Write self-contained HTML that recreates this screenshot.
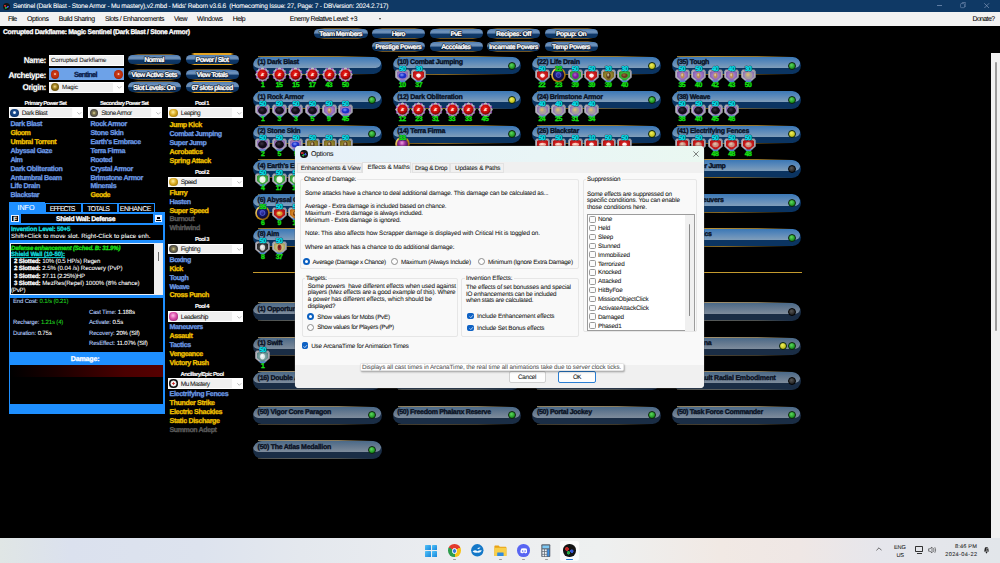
<!DOCTYPE html>
<html><head><meta charset="utf-8"><title>Mids Reborn</title>
<style>
*{box-sizing:border-box;margin:0;padding:0}
html,body{width:1000px;height:563px;overflow:hidden;background:#000}
body{position:relative;font-family:"Liberation Sans",sans-serif;}
.a{position:absolute}
svg.tx{pointer-events:none;overflow:visible}
svg.tx text{font-family:"Liberation Sans",sans-serif;white-space:pre;text-rendering:geometricPrecision}
/* power bars */
.bar{position:absolute;height:17.5px}
.bar:before,.bar:after{content:"";position:absolute;left:5px;right:9px;height:1px;background:linear-gradient(90deg,#94742a,#b8923a 30%,#94742a 70%,rgba(120,90,30,0))}
.bar:before{top:-0.7px}.bar:after{bottom:-0.7px;background:linear-gradient(90deg,#6a5018,#8a6a24 40%,rgba(110,84,26,0))}
.bar b{position:absolute;left:0;top:0;right:0;bottom:0;border-radius:9px;background:#0b3461;overflow:hidden}
.bar i{position:absolute;left:0;right:0.8px;top:0;height:11.3px;border-radius:9px 9px 7px 7px/8px 8px 6px 6px;background:linear-gradient(#3b78b6,#5a89ba 45%,#809eba)}
.bar.g b{background:#1a2d45}
.bar.g:before,.bar.g:after{background:linear-gradient(90deg,#8a7c5c,#a09070 30%,#8a7c5c 70%,rgba(130,116,90,0))}
.bar.g i{background:linear-gradient(#4a6988,#63788f 45%,#7e8c9c)}
.bar.g:after{opacity:0.45}
.tg{position:absolute;width:8px;height:8px;border-radius:50%;border:0.8px solid #0c260c}
.tg.gr{background:radial-gradient(circle at 40% 35%,#5fd65f,#1f9a24 60%,#0d5a12)}
.tg.ye{background:radial-gradient(circle at 40% 35%,#f0f060,#c4c420 60%,#77770a)}
.tg.bk{background:radial-gradient(circle at 40% 35%,#555,#2a2a2a 60%,#111);border-color:#000}
/* small buttons */
.btn{position:absolute;border-radius:5px;background:linear-gradient(#4f7db4 0,#7093bb 30%,#6388b3 46%,#10396a 56%,#0c335f 100%)}
.btn:before,.btn:after{content:"";position:absolute;left:5px;right:5px;height:0.9px;background:linear-gradient(90deg,transparent,#6e5220 12%,#6e5220 88%,transparent)}
.btn:before{top:-0.9px}.btn:after{bottom:-0.9px}
.btn.on:before,.btn.on:after{height:1.4px;background:linear-gradient(90deg,transparent,#e3a322 8%,#e3a322 92%,transparent)}
.btn.on:before{top:-1.4px}.btn.on:after{bottom:-1.4px}
.ic{position:absolute;width:15px;height:16px}
.dd{position:absolute;background:linear-gradient(90deg,#f0f0f0 0,#f0f0f0 86%,#fff 87%);border:0.7px solid #fff;height:10.7px}
.chev{position:absolute;width:4.6px;height:2.7px;overflow:visible}
.gb{position:absolute;border:0.5px solid #e6e6e6;border-radius:2px}
.cb{position:absolute;width:6.6px;height:6.6px;border:0.5px solid #999;border-radius:1.6px;background:#fbfbfb}
.cb.on{background:#0f62c4;border-color:#0f62c4}
.cb svg{position:absolute;left:-0.5px;top:-0.5px}
.rd{position:absolute;width:7px;height:7px;border:0.5px solid #8c8c8c;border-radius:50%;background:#fdfdfd}
.rd.on{border:2px solid #0a5fc0;background:#fff}
</style></head><body>
<!--DEFS--><svg width="0" height="0" style="position:absolute"><defs><radialGradient id="gFr" cx="45%" cy="40%" r="70%"><stop offset="0" stop-color="#dcdce2"/><stop offset="0.6" stop-color="#b0b0ba"/><stop offset="1" stop-color="#74747f"/></radialGradient><radialGradient id="c_red" cx="45%" cy="40%" r="60%"><stop offset="0" stop-color="#f85040"/><stop offset="0.3" stop-color="#e01410"/><stop offset="0.75" stop-color="#b40808"/><stop offset="1" stop-color="#580000"/></radialGradient><radialGradient id="c_navy" cx="45%" cy="40%" r="60%"><stop offset="0" stop-color="#4040b8"/><stop offset="0.5" stop-color="#181870"/><stop offset="1" stop-color="#080830"/></radialGradient><linearGradient id="gGold" x1="0" y1="0" x2="1" y2="1"><stop offset="0" stop-color="#fff0a0"/><stop offset="0.5" stop-color="#c89018"/><stop offset="1" stop-color="#6a4808"/></linearGradient><radialGradient id="b_dark" cx="50%" cy="45%" r="62%"><stop offset="0" stop-color="#c0a2dc"/><stop offset="1" stop-color="#8460ac"/></radialGradient><radialGradient id="g_dark" cx="42%" cy="38%" r="65%"><stop offset="0" stop-color="#3a3040"/><stop offset="0.55" stop-color="#120c18"/><stop offset="1" stop-color="#120c18"/></radialGradient><radialGradient id="b_purple" cx="50%" cy="45%" r="62%"><stop offset="0" stop-color="#b894d8"/><stop offset="1" stop-color="#7e56aa"/></radialGradient><radialGradient id="g_purple" cx="42%" cy="38%" r="65%"><stop offset="0" stop-color="#f0d8b0"/><stop offset="0.55" stop-color="#b88a58"/><stop offset="1" stop-color="#b88a58"/></radialGradient><radialGradient id="b_blue" cx="50%" cy="45%" r="62%"><stop offset="0" stop-color="#c0a2dc"/><stop offset="1" stop-color="#8460ac"/></radialGradient><radialGradient id="g_blue" cx="42%" cy="38%" r="65%"><stop offset="0" stop-color="#8098ff"/><stop offset="0.55" stop-color="#1c30c8"/><stop offset="1" stop-color="#1c30c8"/></radialGradient><radialGradient id="b_green" cx="50%" cy="45%" r="62%"><stop offset="0" stop-color="#70d868"/><stop offset="1" stop-color="#228a28"/></radialGradient><radialGradient id="g_green" cx="42%" cy="38%" r="65%"><stop offset="0" stop-color="#ffffff"/><stop offset="0.55" stop-color="#e8f4e4"/><stop offset="1" stop-color="#e8f4e4"/></radialGradient><radialGradient id="b_tan" cx="50%" cy="45%" r="62%"><stop offset="0" stop-color="#c0aad2"/><stop offset="1" stop-color="#866ca4"/></radialGradient><radialGradient id="g_tan" cx="42%" cy="38%" r="65%"><stop offset="0" stop-color="#e8c070"/><stop offset="0.55" stop-color="#a8a098"/><stop offset="1" stop-color="#a8a098"/></radialGradient><radialGradient id="b_olive" cx="50%" cy="45%" r="62%"><stop offset="0" stop-color="#b8a840"/><stop offset="1" stop-color="#6a5c18"/></radialGradient><radialGradient id="g_olive" cx="42%" cy="38%" r="65%"><stop offset="0" stop-color="#e8e0c0"/><stop offset="0.55" stop-color="#5a3a18"/><stop offset="1" stop-color="#5a3a18"/></radialGradient><radialGradient id="b_grn2" cx="50%" cy="45%" r="62%"><stop offset="0" stop-color="#50e050"/><stop offset="1" stop-color="#1c9020"/></radialGradient><radialGradient id="g_grn2" cx="42%" cy="38%" r="65%"><stop offset="0" stop-color="#a06a40"/><stop offset="0.55" stop-color="#6a3a1c"/><stop offset="1" stop-color="#6a3a1c"/></radialGradient><radialGradient id="b_teal" cx="50%" cy="45%" r="62%"><stop offset="0" stop-color="#a8c8c8"/><stop offset="1" stop-color="#4c7878"/></radialGradient><radialGradient id="g_teal" cx="42%" cy="38%" r="65%"><stop offset="0" stop-color="#ffffff"/><stop offset="0.55" stop-color="#dfeaea"/><stop offset="1" stop-color="#dfeaea"/></radialGradient><radialGradient id="b_white" cx="50%" cy="45%" r="62%"><stop offset="0" stop-color="#5c5c5c"/><stop offset="1" stop-color="#1c1c1c"/></radialGradient><radialGradient id="g_white" cx="42%" cy="38%" r="65%"><stop offset="0" stop-color="#ffffff"/><stop offset="0.55" stop-color="#d8d8d8"/><stop offset="1" stop-color="#d8d8d8"/></radialGradient><radialGradient id="b_fence" cx="50%" cy="45%" r="62%"><stop offset="0" stop-color="#f03030"/><stop offset="1" stop-color="#a80c0c"/></radialGradient><radialGradient id="g_fence" cx="42%" cy="38%" r="65%"><stop offset="0" stop-color="#f0c8b0"/><stop offset="0.55" stop-color="#c89080"/><stop offset="1" stop-color="#c89080"/></radialGradient><radialGradient id="b_redg" cx="50%" cy="45%" r="62%"><stop offset="0" stop-color="#e83030"/><stop offset="1" stop-color="#a00c0c"/></radialGradient><radialGradient id="g_redg" cx="42%" cy="38%" r="65%"><stop offset="0" stop-color="#ffe090"/><stop offset="0.55" stop-color="#d89a28"/><stop offset="1" stop-color="#d89a28"/></radialGradient><radialGradient id="b_cream" cx="50%" cy="45%" r="62%"><stop offset="0" stop-color="#e4dca0"/><stop offset="1" stop-color="#a09850"/></radialGradient><radialGradient id="g_cream" cx="42%" cy="38%" r="65%"><stop offset="0" stop-color="#402020"/><stop offset="0.55" stop-color="#a02828"/><stop offset="1" stop-color="#a02828"/></radialGradient><radialGradient id="b_orange" cx="50%" cy="45%" r="62%"><stop offset="0" stop-color="#f8b040"/><stop offset="1" stop-color="#b05808"/></radialGradient><radialGradient id="g_orange" cx="42%" cy="38%" r="65%"><stop offset="0" stop-color="#ffd890"/><stop offset="0.55" stop-color="#7a3808"/><stop offset="1" stop-color="#7a3808"/></radialGradient><radialGradient id="b_violet" cx="50%" cy="45%" r="62%"><stop offset="0" stop-color="#58d858"/><stop offset="1" stop-color="#209028"/></radialGradient><radialGradient id="g_violet" cx="42%" cy="38%" r="65%"><stop offset="0" stop-color="#b060d0"/><stop offset="0.55" stop-color="#7a1c9c"/><stop offset="1" stop-color="#7a1c9c"/></radialGradient><radialGradient id="b_redw" cx="50%" cy="45%" r="62%"><stop offset="0" stop-color="#f03030"/><stop offset="1" stop-color="#a80c0c"/></radialGradient><radialGradient id="g_redw" cx="42%" cy="38%" r="65%"><stop offset="0" stop-color="#ffffff"/><stop offset="0.55" stop-color="#ffe8e8"/><stop offset="1" stop-color="#ffe8e8"/></radialGradient><radialGradient id="b_pinkr" cx="50%" cy="45%" r="62%"><stop offset="0" stop-color="#f03030"/><stop offset="1" stop-color="#a80c0c"/></radialGradient><radialGradient id="g_pinkr" cx="42%" cy="38%" r="65%"><stop offset="0" stop-color="#ffe8e0"/><stop offset="0.55" stop-color="#f4b0a0"/><stop offset="1" stop-color="#f4b0a0"/></radialGradient><radialGradient id="c_mag" cx="45%" cy="40%" r="60%"><stop offset="0" stop-color="#f0a0e0"/><stop offset="0.45" stop-color="#a030a0"/><stop offset="1" stop-color="#401048"/></radialGradient><symbol id="i_io" viewBox="0 0 15 16"><polygon points="14.95,7.60 13.78,9.28 13.95,11.32 12.10,12.20 11.23,14.05 9.18,13.88 7.50,15.05 5.82,13.88 3.78,14.05 2.90,12.20 1.05,11.32 1.22,9.28 0.05,7.60 1.22,5.92 1.05,3.88 2.90,3.00 3.77,1.15 5.82,1.32 7.50,0.15 9.18,1.32 11.23,1.15 12.10,3.00 13.95,3.87 13.78,5.92" fill="url(#gFr)"/><circle cx="13.33" cy="10.00" r="0.85" fill="#8a30b0"/><circle cx="9.93" cy="13.41" r="0.85" fill="#8a30b0"/><circle cx="5.10" cy="13.43" r="0.85" fill="#8a30b0"/><circle cx="1.69" cy="10.03" r="0.85" fill="#8a30b0"/><circle cx="1.67" cy="5.20" r="0.85" fill="#8a30b0"/><circle cx="5.07" cy="1.79" r="0.85" fill="#8a30b0"/><circle cx="9.90" cy="1.77" r="0.85" fill="#8a30b0"/><circle cx="13.31" cy="5.17" r="0.85" fill="#8a30b0"/><circle cx="7.5" cy="7.6" r="5.1" fill="url(#c_red)"/><path d="M5.4 8.4 L7.4 5.9 L9.7 6.5 L8.2 7.6 L9.2 8.6 L6.6 9.2 Z" fill="#ffe4d4" opacity="0.92"/></symbol><symbol id="i_dark" viewBox="0 0 15 16"><path d="M1.6 2.6 L13.4 2.6 L14.8 4.2 L14.8 10.6 L9.2 15.3 L5.8 15.3 L0.2 10.6 L0.2 4.2 Z" fill="url(#gFr)"/><path d="M9.2 15.3 L5.8 15.3 L3.4 13.2 L11.6 13.2 Z" fill="#4a86c8"/><path d="M3.1 4.2 L11.9 4.2 L13 5.3 L13 10 L8.6 13.5 L6.4 13.5 L2 10 L2 5.3 Z" fill="url(#b_dark)"/><ellipse cx="7.5" cy="8.6" rx="4.4" ry="3.9" fill="url(#g_dark)"/></symbol><symbol id="i_purple" viewBox="0 0 15 16"><path d="M1.6 2.6 L13.4 2.6 L14.8 4.2 L14.8 10.6 L9.2 15.3 L5.8 15.3 L0.2 10.6 L0.2 4.2 Z" fill="url(#gFr)"/><path d="M9.2 15.3 L5.8 15.3 L3.4 13.2 L11.6 13.2 Z" fill="#4a86c8"/><path d="M3.1 4.2 L11.9 4.2 L13 5.3 L13 10 L8.6 13.5 L6.4 13.5 L2 10 L2 5.3 Z" fill="url(#b_purple)"/><ellipse cx="7.5" cy="8.6" rx="2.0" ry="2.8" fill="url(#g_purple)"/></symbol><symbol id="i_blue" viewBox="0 0 15 16"><path d="M1.6 2.6 L13.4 2.6 L14.8 4.2 L14.8 10.6 L9.2 15.3 L5.8 15.3 L0.2 10.6 L0.2 4.2 Z" fill="url(#gFr)"/><path d="M9.2 15.3 L5.8 15.3 L3.4 13.2 L11.6 13.2 Z" fill="#4a86c8"/><path d="M3.1 4.2 L11.9 4.2 L13 5.3 L13 10 L8.6 13.5 L6.4 13.5 L2 10 L2 5.3 Z" fill="url(#b_blue)"/><ellipse cx="7.5" cy="8.6" rx="3.9" ry="2.9" fill="url(#g_blue)"/></symbol><symbol id="i_green" viewBox="0 0 15 16"><path d="M1.6 2.6 L13.4 2.6 L14.8 4.2 L14.8 10.6 L9.2 15.3 L5.8 15.3 L0.2 10.6 L0.2 4.2 Z" fill="url(#gFr)"/><path d="M9.2 15.3 L5.8 15.3 L3.4 13.2 L11.6 13.2 Z" fill="#4a86c8"/><path d="M3.1 4.2 L11.9 4.2 L13 5.3 L13 10 L8.6 13.5 L6.4 13.5 L2 10 L2 5.3 Z" fill="url(#b_green)"/><ellipse cx="7.5" cy="8.6" rx="3.0" ry="3.3" fill="url(#g_green)"/></symbol><symbol id="i_tan" viewBox="0 0 15 16"><path d="M1.6 2.6 L13.4 2.6 L14.8 4.2 L14.8 10.6 L9.2 15.3 L5.8 15.3 L0.2 10.6 L0.2 4.2 Z" fill="url(#gFr)"/><path d="M9.2 15.3 L5.8 15.3 L3.4 13.2 L11.6 13.2 Z" fill="#4a86c8"/><path d="M3.1 4.2 L11.9 4.2 L13 5.3 L13 10 L8.6 13.5 L6.4 13.5 L2 10 L2 5.3 Z" fill="url(#b_tan)"/><ellipse cx="7.5" cy="8.6" rx="3.6" ry="3.5" fill="url(#g_tan)"/></symbol><symbol id="i_olive" viewBox="0 0 15 16"><path d="M1.6 2.6 L13.4 2.6 L14.8 4.2 L14.8 10.6 L9.2 15.3 L5.8 15.3 L0.2 10.6 L0.2 4.2 Z" fill="url(#gFr)"/><path d="M9.2 15.3 L5.8 15.3 L3.4 13.2 L11.6 13.2 Z" fill="#4a86c8"/><path d="M3.1 4.2 L11.9 4.2 L13 5.3 L13 10 L8.6 13.5 L6.4 13.5 L2 10 L2 5.3 Z" fill="url(#b_olive)"/><ellipse cx="7.5" cy="8.6" rx="2.2" ry="3.2" fill="url(#g_olive)"/></symbol><symbol id="i_grn2" viewBox="0 0 15 16"><path d="M1.6 2.6 L13.4 2.6 L14.8 4.2 L14.8 10.6 L9.2 15.3 L5.8 15.3 L0.2 10.6 L0.2 4.2 Z" fill="url(#gFr)"/><path d="M9.2 15.3 L5.8 15.3 L3.4 13.2 L11.6 13.2 Z" fill="#4a86c8"/><path d="M3.1 4.2 L11.9 4.2 L13 5.3 L13 10 L8.6 13.5 L6.4 13.5 L2 10 L2 5.3 Z" fill="url(#b_grn2)"/><ellipse cx="7.5" cy="8.6" rx="3.2" ry="2.4" fill="url(#g_grn2)"/></symbol><symbol id="i_teal" viewBox="0 0 15 16"><path d="M1.6 2.6 L13.4 2.6 L14.8 4.2 L14.8 10.6 L9.2 15.3 L5.8 15.3 L0.2 10.6 L0.2 4.2 Z" fill="url(#gFr)"/><path d="M9.2 15.3 L5.8 15.3 L3.4 13.2 L11.6 13.2 Z" fill="#4a86c8"/><path d="M3.1 4.2 L11.9 4.2 L13 5.3 L13 10 L8.6 13.5 L6.4 13.5 L2 10 L2 5.3 Z" fill="url(#b_teal)"/><ellipse cx="7.5" cy="8.6" rx="2.4" ry="2.8" fill="url(#g_teal)"/></symbol><symbol id="i_white" viewBox="0 0 15 16"><path d="M1.6 2.6 L13.4 2.6 L14.8 4.2 L14.8 10.6 L9.2 15.3 L5.8 15.3 L0.2 10.6 L0.2 4.2 Z" fill="url(#gFr)"/><path d="M9.2 15.3 L5.8 15.3 L3.4 13.2 L11.6 13.2 Z" fill="#4a86c8"/><path d="M3.1 4.2 L11.9 4.2 L13 5.3 L13 10 L8.6 13.5 L6.4 13.5 L2 10 L2 5.3 Z" fill="url(#b_white)"/><ellipse cx="7.5" cy="8.6" rx="2.6" ry="3.1" fill="url(#g_white)"/></symbol><symbol id="i_fence" viewBox="0 0 15 16"><path d="M1.6 2.6 L13.4 2.6 L14.8 4.2 L14.8 10.6 L9.2 15.3 L5.8 15.3 L0.2 10.6 L0.2 4.2 Z" fill="url(#gFr)"/><path d="M9.2 15.3 L5.8 15.3 L3.4 13.2 L11.6 13.2 Z" fill="#4a86c8"/><path d="M3.1 4.2 L11.9 4.2 L13 5.3 L13 10 L8.6 13.5 L6.4 13.5 L2 10 L2 5.3 Z" fill="url(#b_fence)"/><ellipse cx="7.5" cy="8.6" rx="3.2" ry="2.6" fill="url(#g_fence)"/></symbol><symbol id="i_redg" viewBox="0 0 15 16"><path d="M1.6 2.6 L13.4 2.6 L14.8 4.2 L14.8 10.6 L9.2 15.3 L5.8 15.3 L0.2 10.6 L0.2 4.2 Z" fill="url(#gFr)"/><path d="M9.2 15.3 L5.8 15.3 L3.4 13.2 L11.6 13.2 Z" fill="#4a86c8"/><path d="M3.1 4.2 L11.9 4.2 L13 5.3 L13 10 L8.6 13.5 L6.4 13.5 L2 10 L2 5.3 Z" fill="url(#b_redg)"/><ellipse cx="7.5" cy="8.6" rx="3.0" ry="2.4" fill="url(#g_redg)"/></symbol><symbol id="i_cream" viewBox="0 0 15 16"><path d="M1.6 2.6 L13.4 2.6 L14.8 4.2 L14.8 10.6 L9.2 15.3 L5.8 15.3 L0.2 10.6 L0.2 4.2 Z" fill="url(#gFr)"/><path d="M9.2 15.3 L5.8 15.3 L3.4 13.2 L11.6 13.2 Z" fill="#4a86c8"/><path d="M3.1 4.2 L11.9 4.2 L13 5.3 L13 10 L8.6 13.5 L6.4 13.5 L2 10 L2 5.3 Z" fill="url(#b_cream)"/><ellipse cx="7.5" cy="8.6" rx="2.0" ry="3.0" fill="url(#g_cream)"/></symbol><symbol id="i_orange" viewBox="0 0 15 16"><path d="M1.6 2.6 L13.4 2.6 L14.8 4.2 L14.8 10.6 L9.2 15.3 L5.8 15.3 L0.2 10.6 L0.2 4.2 Z" fill="url(#gFr)"/><path d="M9.2 15.3 L5.8 15.3 L3.4 13.2 L11.6 13.2 Z" fill="#4a86c8"/><path d="M3.1 4.2 L11.9 4.2 L13 5.3 L13 10 L8.6 13.5 L6.4 13.5 L2 10 L2 5.3 Z" fill="url(#b_orange)"/><ellipse cx="7.5" cy="8.6" rx="2.6" ry="2.6" fill="url(#g_orange)"/></symbol><symbol id="i_violet" viewBox="0 0 15 16"><path d="M1.6 2.6 L13.4 2.6 L14.8 4.2 L14.8 10.6 L9.2 15.3 L5.8 15.3 L0.2 10.6 L0.2 4.2 Z" fill="url(#gFr)"/><path d="M9.2 15.3 L5.8 15.3 L3.4 13.2 L11.6 13.2 Z" fill="#4a86c8"/><path d="M3.1 4.2 L11.9 4.2 L13 5.3 L13 10 L8.6 13.5 L6.4 13.5 L2 10 L2 5.3 Z" fill="url(#b_violet)"/><ellipse cx="7.5" cy="8.6" rx="3.3" ry="3.4" fill="url(#g_violet)"/></symbol><symbol id="i_redw" viewBox="0 0 15 16"><path d="M1.6 2.6 L13.4 2.6 L14.8 4.2 L14.8 10.6 L9.2 15.3 L5.8 15.3 L0.2 10.6 L0.2 4.2 Z" fill="url(#gFr)"/><path d="M9.2 15.3 L5.8 15.3 L3.4 13.2 L11.6 13.2 Z" fill="#4a86c8"/><path d="M3.1 4.2 L11.9 4.2 L13 5.3 L13 10 L8.6 13.5 L6.4 13.5 L2 10 L2 5.3 Z" fill="url(#b_redw)"/><ellipse cx="7.5" cy="8.6" rx="2.3" ry="2.1" fill="url(#g_redw)"/></symbol><symbol id="i_pinkr" viewBox="0 0 15 16"><path d="M1.6 2.6 L13.4 2.6 L14.8 4.2 L14.8 10.6 L9.2 15.3 L5.8 15.3 L0.2 10.6 L0.2 4.2 Z" fill="url(#gFr)"/><path d="M9.2 15.3 L5.8 15.3 L3.4 13.2 L11.6 13.2 Z" fill="#4a86c8"/><path d="M3.1 4.2 L11.9 4.2 L13 5.3 L13 10 L8.6 13.5 L6.4 13.5 L2 10 L2 5.3 Z" fill="url(#b_pinkr)"/><ellipse cx="7.5" cy="8.6" rx="3.5" ry="1.9" fill="url(#g_pinkr)"/></symbol><symbol id="i_ring2" viewBox="0 0 15 16"><circle cx="7.5" cy="8" r="7.3" fill="url(#gGold)"/><circle cx="7.5" cy="8" r="5.5" fill="url(#c_mag)"/></symbol><symbol id="i_ring" viewBox="0 0 15 16"><circle cx="7.5" cy="8" r="7.3" fill="url(#gGold)"/><circle cx="7.5" cy="8" r="5.7" fill="url(#c_navy)"/><circle cx="7.5" cy="8" r="2.4" fill="none" stroke="#5868e0" stroke-width="0.8"/></symbol></defs></svg>
<div class="a" style="left:0;top:0;width:1000px;height:12px;background:#0f3965"></div><div class="a" style="left:0;top:12px;width:1000px;height:13.6px;background:#f2f2f2"></div><div class="a" style="left:3px;top:2.5px;width:7px;height:7px;border-radius:50%;background:radial-gradient(circle at 30% 38%,#c02828 0,#c02828 14%,transparent 18%),radial-gradient(circle at 42% 68%,#28a848 0,#28a848 13%,transparent 17%),radial-gradient(circle at 68% 55%,#3858d8 0,#3858d8 13%,transparent 17%),#141414"></div><div class="a" style="left:937.2px;top:4.9px;width:5.2px;height:0.7px;background:#5f7da3"></div><svg class="a" style="left:959.8px;top:2.2px" width="6.4" height="6.4" viewBox="0 0 7 7"><rect x="0.6" y="1.8" width="4.4" height="4.4" rx="0.8" fill="none" stroke="#6f8bb0" stroke-width="0.7"/><path d="M2 1.8V1.4Q2 0.6 2.8 0.6H5.6Q6.4 0.6 6.4 1.4V4.2Q6.4 5 5.6 5H5" fill="none" stroke="#7d92b6" stroke-width="0.7"/></svg><svg class="a" style="left:984.2px;top:2.8px" width="5.4" height="5.4" viewBox="0 0 6 6"><path d="M0.3 0.3L5.7 5.7M5.7 0.3L0.3 5.7" stroke="#8ea3c2" stroke-width="0.7"/></svg><div class="a" style="left:379px;top:17.5px;width:0;height:0;border-left:1.6px solid transparent;border-right:1.6px solid transparent;border-top:2px solid #333"></div><div class="a" style="left:991px;top:53px;width:9px;height:485px;background:#f0f0f0"></div><div class="a" style="left:995px;top:62px;width:1.6px;height:269px;background:#9a9a9a;border-radius:1px"></div><div class="a" style="left:0;top:537.6px;width:1000px;height:25.4px;background:linear-gradient(90deg,#e0e6e5 0%,#dbe1ee 7%,#dde3ee 20%,#e4e8ee 30%,#ebedf0 45%,#eef0f0 60%,#f1e9e4 72%,#efe7e5 80%,#e6e6ec 88%,#e2e6ea 100%)"></div><div class="a" style="left:48.8px;top:55px;width:75.2px;height:10.8px;background:#f0f0f0;border:0.7px solid #fff"></div><div class="a" style="left:48.8px;top:68px;width:75.2px;height:11.9px;background:#6da2e8"></div><div class="a" style="left:50.6px;top:70.3px;width:8.4px;height:8.4px;border-radius:50%;background:radial-gradient(circle at 50% 45%,#fff0e8 0,#f0b8a0 9%,#d03c18 20%,#b42a0a 60%,#6a1404)"></div><div class="a" style="left:114.2px;top:70.3px;width:8.4px;height:8.4px;border-radius:50%;background:radial-gradient(circle at 50% 45%,#fff0e8 0,#f0b8a0 9%,#d03c18 20%,#b42a0a 60%,#6a1404)"></div><div class="a" style="left:48.8px;top:82px;width:75.2px;height:10.7px;background:linear-gradient(90deg,#f0f0f0 0,#f0f0f0 86%,#fff 87%);border:0.7px solid #fff"></div><div class="a" style="left:51px;top:83px;width:8.2px;height:8.2px;border-radius:50%;background:radial-gradient(circle at 48% 45%,#f0e0a0 0,#c8a848 18%,#8a6c14 45%,#4a3808)"></div><svg class="chev" style="left:116.7px;top:86.2px" viewBox="0 0 4.6 2.7"><path d="M0.3 0.3L2.3 2.3L4.3 0.3" fill="none" stroke="#858585" stroke-width="0.55"/></svg><div class="btn" style="left:127.8px;top:54.8px;width:53.1px;height:9.2px"></div><div class="btn on" style="left:185.7px;top:54.8px;width:53.3px;height:9.2px"></div><div class="btn" style="left:127.8px;top:69.7px;width:53.1px;height:9.3px"></div><div class="btn" style="left:185.7px;top:69.7px;width:53.3px;height:9.3px"></div><div class="btn" style="left:127.8px;top:82.2px;width:53.1px;height:9.6px"></div><div class="btn on" style="left:185.7px;top:82.2px;width:53.3px;height:9.6px"></div><div class="btn" style="left:314.3px;top:28.7px;width:53.3px;height:9.3px"></div><div class="btn" style="left:371.90000000000003px;top:28.7px;width:53.3px;height:9.3px"></div><div class="btn" style="left:429.5px;top:28.7px;width:53.3px;height:9.3px"></div><div class="btn" style="left:487.1px;top:28.7px;width:53.3px;height:9.3px"></div><div class="btn" style="left:544.7px;top:28.7px;width:53.3px;height:9.3px"></div><div class="btn" style="left:371.9px;top:42px;width:53.3px;height:9.3px"></div><div class="btn" style="left:429.5px;top:42px;width:53.3px;height:9.3px"></div><div class="btn" style="left:487.09999999999997px;top:42px;width:53.3px;height:9.3px"></div><div class="btn" style="left:544.7px;top:42px;width:53.3px;height:9.3px"></div><div class="dd" style="left:8.6px;top:107.4px;width:74.6px"></div><div class="a" style="left:10.4px;top:108.60000000000001px;width:8.2px;height:8.2px;border-radius:50%;background:radial-gradient(circle at 50% 45%,#ffffff 0,#e8f0ff 14%,#1c4f90 30%,#0b2f66 80%)"></div><svg class="chev" style="left:76.49999999999999px;top:111.80000000000001px" viewBox="0 0 4.6 2.7"><path d="M0.3 0.3L2.3 2.3L4.3 0.3" fill="none" stroke="#858585" stroke-width="0.55"/></svg><div class="dd" style="left:88px;top:107.4px;width:74.4px"></div><div class="a" style="left:89.8px;top:108.60000000000001px;width:8.2px;height:8.2px;border-radius:50%;background:radial-gradient(circle at 50% 50%,#e8e0b0 0,#8a8050 25%,#55524a 55%,#2a2a2a)"></div><svg class="chev" style="left:155.70000000000002px;top:111.80000000000001px" viewBox="0 0 4.6 2.7"><path d="M0.3 0.3L2.3 2.3L4.3 0.3" fill="none" stroke="#858585" stroke-width="0.55"/></svg><div class="dd" style="left:167.6px;top:107.4px;width:75.6px"></div><div class="a" style="left:169.4px;top:108.60000000000001px;width:8.2px;height:8.2px;border-radius:50%;background:radial-gradient(circle at 45% 40%,#fff0a0 0,#d8a81e 45%,#7a5a08)"></div><svg class="chev" style="left:236.5px;top:111.80000000000001px" viewBox="0 0 4.6 2.7"><path d="M0.3 0.3L2.3 2.3L4.3 0.3" fill="none" stroke="#858585" stroke-width="0.55"/></svg><div class="dd" style="left:167.6px;top:176.6px;width:75.6px"></div><div class="a" style="left:169.4px;top:177.79999999999998px;width:8.2px;height:8.2px;border-radius:50%;background:radial-gradient(circle at 45% 40%,#fff0a0 0,#d8a81e 45%,#7a5a08)"></div><svg class="chev" style="left:236.5px;top:181.0px" viewBox="0 0 4.6 2.7"><path d="M0.3 0.3L2.3 2.3L4.3 0.3" fill="none" stroke="#858585" stroke-width="0.55"/></svg><div class="dd" style="left:167.6px;top:243.8px;width:75.6px"></div><div class="a" style="left:169.4px;top:245.0px;width:8.2px;height:8.2px;border-radius:50%;background:radial-gradient(circle at 50% 50%,#e8e0b0 0,#8a8050 25%,#55524a 55%,#2a2a2a)"></div><svg class="chev" style="left:236.5px;top:248.20000000000002px" viewBox="0 0 4.6 2.7"><path d="M0.3 0.3L2.3 2.3L4.3 0.3" fill="none" stroke="#858585" stroke-width="0.55"/></svg><div class="dd" style="left:167.6px;top:311.2px;width:75.6px"></div><div class="a" style="left:169.4px;top:312.4px;width:8.2px;height:8.2px;border-radius:50%;background:radial-gradient(circle at 45% 40%,#ffc0e8 0,#d84aa8 45%,#7a1a58)"></div><svg class="chev" style="left:236.5px;top:315.59999999999997px" viewBox="0 0 4.6 2.7"><path d="M0.3 0.3L2.3 2.3L4.3 0.3" fill="none" stroke="#858585" stroke-width="0.55"/></svg><div class="dd" style="left:167.6px;top:378.2px;width:75.6px"></div><div class="a" style="left:169.4px;top:379.4px;width:8.2px;height:8.2px;border-radius:50%;background:radial-gradient(circle at 50% 50%,#c82020 0,#c82020 14%,#f0f0f0 22%,#f0f0f0 42%,#141414 52%)"></div><svg class="chev" style="left:236.5px;top:382.59999999999997px" viewBox="0 0 4.6 2.7"><path d="M0.3 0.3L2.3 2.3L4.3 0.3" fill="none" stroke="#858585" stroke-width="0.55"/></svg><div class="a" style="left:9px;top:201.6px;width:36px;height:10.4px;background:#1e8fff"></div><div class="a" style="left:45px;top:203.2px;width:36.5px;height:8.6px;border:0.7px solid #1e8fff;border-bottom:none;background:#000"></div><div class="a" style="left:81.5px;top:203.2px;width:36.7px;height:8.6px;border:0.7px solid #1e8fff;border-bottom:none;background:#000"></div><div class="a" style="left:118.2px;top:203.2px;width:36.5px;height:8.6px;border:0.7px solid #1e8fff;border-bottom:none;background:#000"></div><div class="a" style="left:9px;top:211.6px;width:155.5px;height:202.2px;background:#1e8fff"></div><div class="a" style="left:10.6px;top:214.6px;width:8px;height:7.6px;background:#000;border:0.7px solid #e8f0ff"></div><div class="a" style="left:20.8px;top:214px;width:131.8px;height:9px;background:#000"></div><div class="a" style="left:154.6px;top:214.6px;width:7.6px;height:7.6px;background:#000;border:0.6px solid #e8f0ff"></div><div class="a" style="left:156px;top:216px;width:4.8px;height:3.6px;border:0.7px solid #e8f0ff;border-top-width:1.3px"></div><div class="a" style="left:10px;top:224.8px;width:152.6px;height:15px;background:#000"></div><div class="a" style="left:10px;top:243px;width:152.6px;height:52.2px;background:#000;border:0.7px solid #e8eef8"></div><div class="a" style="left:153.6px;top:243.6px;width:8.4px;height:51px;background:#f0f0f0"></div><div class="a" style="left:157.9px;top:252.4px;width:0.9px;height:8.8px;background:#6a6a6a"></div><div class="a" style="left:10.4px;top:297.8px;width:152.2px;height:54.4px;background:#000"></div><div class="a" style="left:10px;top:365px;width:152.6px;height:38.6px;background:#000"></div><div class="a" style="left:10px;top:365px;width:152.6px;height:12px;background:linear-gradient(90deg,#000 0%,#1a0000 30%,#4a0000 75%,#560000 100%)"></div><div class="bar" style="left:253.0px;top:56.8px;width:128.6px"><b><i></i></b></div><svg class="ic" style="left:255.30px;top:67.40px"><use href="#i_io"/></svg><svg class="ic" style="left:271.85px;top:67.40px"><use href="#i_io"/></svg><svg class="ic" style="left:288.40px;top:67.40px"><use href="#i_io"/></svg><svg class="ic" style="left:304.95px;top:67.40px"><use href="#i_io"/></svg><svg class="ic" style="left:321.50px;top:67.40px"><use href="#i_io"/></svg><svg class="ic" style="left:338.05px;top:67.40px"><use href="#i_io"/></svg><div class="bar" style="left:253.0px;top:91.2px;width:128.6px"><b><i></i></b></div><div class="tg gr" style="left:368.2px;top:96.0px"></div><svg class="ic" style="left:255.30px;top:101.80px"><use href="#i_dark"/></svg><svg class="ic" style="left:271.85px;top:101.80px"><use href="#i_dark"/></svg><svg class="ic" style="left:288.40px;top:101.80px"><use href="#i_dark"/></svg><svg class="ic" style="left:304.95px;top:101.80px"><use href="#i_dark"/></svg><svg class="ic" style="left:321.50px;top:101.80px"><use href="#i_purple"/></svg><svg class="ic" style="left:338.05px;top:101.80px"><use href="#i_blue"/></svg><div class="bar" style="left:253.0px;top:125.6px;width:128.6px"><b><i></i></b></div><div class="tg gr" style="left:368.2px;top:130.4px"></div><svg class="ic" style="left:255.30px;top:136.20px"><use href="#i_dark"/></svg><svg class="ic" style="left:271.85px;top:136.20px"><use href="#i_dark"/></svg><svg class="ic" style="left:288.40px;top:136.20px"><use href="#i_blue"/></svg><svg class="ic" style="left:304.95px;top:136.20px"><use href="#i_olive"/></svg><svg class="ic" style="left:321.50px;top:136.20px"><use href="#i_olive"/></svg><svg class="ic" style="left:338.05px;top:136.20px"><use href="#i_olive"/></svg><div class="bar" style="left:253.0px;top:160.0px;width:128.6px"><b><i></i></b></div><svg class="ic" style="left:255.30px;top:170.60px"><use href="#i_green"/></svg><svg class="ic" style="left:271.85px;top:170.60px"><use href="#i_green"/></svg><svg class="ic" style="left:288.40px;top:170.60px"><use href="#i_green"/></svg><svg class="ic" style="left:304.95px;top:170.60px"><use href="#i_green"/></svg><svg class="ic" style="left:321.50px;top:170.60px"><use href="#i_green"/></svg><svg class="ic" style="left:338.05px;top:170.60px"><use href="#i_green"/></svg><div class="bar" style="left:253.0px;top:194.4px;width:128.6px"><b><i></i></b></div><svg class="ic" style="left:255.30px;top:205.00px"><use href="#i_ring"/></svg><svg class="ic" style="left:271.85px;top:205.00px"><use href="#i_redg"/></svg><svg class="ic" style="left:288.40px;top:205.00px"><use href="#i_orange"/></svg><svg class="ic" style="left:304.95px;top:205.00px"><use href="#i_orange"/></svg><svg class="ic" style="left:321.50px;top:205.00px"><use href="#i_orange"/></svg><svg class="ic" style="left:338.05px;top:205.00px"><use href="#i_orange"/></svg><div class="bar" style="left:253.0px;top:228.8px;width:128.6px"><b><i></i></b></div><svg class="ic" style="left:255.30px;top:239.40px"><use href="#i_white"/></svg><svg class="ic" style="left:271.85px;top:239.40px"><use href="#i_cream"/></svg><div class="bar" style="left:392.6px;top:56.8px;width:128.6px"><b><i></i></b></div><div class="tg gr" style="left:507.8px;top:61.6px"></div><svg class="ic" style="left:394.90px;top:67.40px"><use href="#i_blue"/></svg><svg class="ic" style="left:411.45px;top:67.40px"><use href="#i_redw"/></svg><div class="bar" style="left:392.6px;top:91.2px;width:128.6px"><b><i></i></b></div><div class="tg ye" style="left:507.8px;top:96.0px"></div><svg class="ic" style="left:394.90px;top:101.80px"><use href="#i_io"/></svg><svg class="ic" style="left:411.45px;top:101.80px"><use href="#i_io"/></svg><svg class="ic" style="left:428.00px;top:101.80px"><use href="#i_io"/></svg><svg class="ic" style="left:444.55px;top:101.80px"><use href="#i_io"/></svg><svg class="ic" style="left:461.10px;top:101.80px"><use href="#i_io"/></svg><svg class="ic" style="left:477.65px;top:101.80px"><use href="#i_io"/></svg><div class="bar" style="left:392.6px;top:125.6px;width:128.6px"><b><i></i></b></div><div class="tg gr" style="left:507.8px;top:130.4px"></div><svg class="ic" style="left:394.90px;top:136.20px"><use href="#i_ring2"/></svg><div class="bar" style="left:392.6px;top:160.0px;width:128.6px"><b><i></i></b></div><div class="tg gr" style="left:507.8px;top:164.8px"></div><div class="bar" style="left:392.6px;top:194.4px;width:128.6px"><b><i></i></b></div><div class="tg gr" style="left:507.8px;top:199.2px"></div><div class="bar" style="left:392.6px;top:228.8px;width:128.6px"><b><i></i></b></div><div class="bar" style="left:532.3px;top:56.8px;width:128.6px"><b><i></i></b></div><div class="tg ye" style="left:647.5px;top:61.6px"></div><svg class="ic" style="left:534.60px;top:67.40px"><use href="#i_redw"/></svg><svg class="ic" style="left:551.15px;top:67.40px"><use href="#i_ring"/></svg><svg class="ic" style="left:567.70px;top:67.40px"><use href="#i_violet"/></svg><svg class="ic" style="left:584.25px;top:67.40px"><use href="#i_redw"/></svg><svg class="ic" style="left:600.80px;top:67.40px"><use href="#i_olive"/></svg><svg class="ic" style="left:617.35px;top:67.40px"><use href="#i_grn2"/></svg><div class="bar" style="left:532.3px;top:91.2px;width:128.6px"><b><i></i></b></div><div class="tg gr" style="left:647.5px;top:96.0px"></div><svg class="ic" style="left:534.60px;top:101.80px"><use href="#i_tan"/></svg><svg class="ic" style="left:551.15px;top:101.80px"><use href="#i_tan"/></svg><svg class="ic" style="left:567.70px;top:101.80px"><use href="#i_tan"/></svg><svg class="ic" style="left:584.25px;top:101.80px"><use href="#i_tan"/></svg><div class="bar" style="left:532.3px;top:125.6px;width:128.6px"><b><i></i></b></div><div class="tg ye" style="left:647.5px;top:130.4px"></div><svg class="ic" style="left:534.60px;top:136.20px"><use href="#i_pinkr"/></svg><svg class="ic" style="left:551.15px;top:136.20px"><use href="#i_pinkr"/></svg><svg class="ic" style="left:567.70px;top:136.20px"><use href="#i_pinkr"/></svg><svg class="ic" style="left:584.25px;top:136.20px"><use href="#i_redw"/></svg><svg class="ic" style="left:600.80px;top:136.20px"><use href="#i_redw"/></svg><svg class="ic" style="left:617.35px;top:136.20px"><use href="#i_redw"/></svg><div class="bar" style="left:532.3px;top:160.0px;width:128.6px"><b><i></i></b></div><div class="tg gr" style="left:647.5px;top:164.8px"></div><div class="bar" style="left:532.3px;top:194.4px;width:128.6px"><b><i></i></b></div><div class="tg gr" style="left:647.5px;top:199.2px"></div><div class="bar" style="left:532.3px;top:228.8px;width:128.6px"><b><i></i></b></div><div class="bar" style="left:672.3px;top:56.8px;width:128.6px"><b><i></i></b></div><div class="tg gr" style="left:787.5px;top:61.6px"></div><svg class="ic" style="left:674.60px;top:67.40px"><use href="#i_purple"/></svg><svg class="ic" style="left:691.15px;top:67.40px"><use href="#i_purple"/></svg><svg class="ic" style="left:707.70px;top:67.40px"><use href="#i_purple"/></svg><svg class="ic" style="left:724.25px;top:67.40px"><use href="#i_purple"/></svg><svg class="ic" style="left:740.80px;top:67.40px"><use href="#i_tan"/></svg><div class="bar" style="left:672.3px;top:91.2px;width:128.6px"><b><i></i></b></div><div class="tg gr" style="left:787.5px;top:96.0px"></div><svg class="ic" style="left:674.60px;top:101.80px"><use href="#i_dark"/></svg><svg class="ic" style="left:691.15px;top:101.80px"><use href="#i_dark"/></svg><svg class="ic" style="left:707.70px;top:101.80px"><use href="#i_dark"/></svg><svg class="ic" style="left:724.25px;top:101.80px"><use href="#i_dark"/></svg><div class="bar" style="left:672.3px;top:125.6px;width:128.6px"><b><i></i></b></div><div class="tg ye" style="left:787.5px;top:130.4px"></div><svg class="ic" style="left:674.60px;top:136.20px"><use href="#i_fence"/></svg><svg class="ic" style="left:691.15px;top:136.20px"><use href="#i_fence"/></svg><svg class="ic" style="left:707.70px;top:136.20px"><use href="#i_fence"/></svg><svg class="ic" style="left:724.25px;top:136.20px"><use href="#i_fence"/></svg><svg class="ic" style="left:740.80px;top:136.20px"><use href="#i_fence"/></svg><div class="bar" style="left:672.3px;top:160.0px;width:128.6px"><b><i></i></b></div><div class="tg bk" style="left:787.5px;top:164.8px"></div><div class="bar" style="left:672.3px;top:194.4px;width:128.6px"><b><i></i></b></div><div class="tg gr" style="left:787.5px;top:199.2px"></div><div class="bar" style="left:672.3px;top:228.8px;width:128.6px"><b><i></i></b></div><div class="tg gr" style="left:787.5px;top:233.6px"></div><div class="a" style="left:253px;top:272.4px;width:548.6px;height:1px;background:#c49a2e"></div><div class="bar g" style="left:253.0px;top:303.0px;width:128.6px"><b><i></i></b></div><div class="bar g" style="left:253.0px;top:337.5px;width:128.6px"><b><i></i></b></div><svg class="ic" style="left:255.30px;top:348.10px"><use href="#i_teal"/></svg><div class="bar g" style="left:253.0px;top:372.0px;width:128.6px"><b><i></i></b></div><div class="bar g" style="left:253.0px;top:406.5px;width:128.6px"><b><i></i></b></div><div class="tg gr" style="left:368.2px;top:411.3px"></div><div class="bar g" style="left:253.0px;top:441.0px;width:128.6px"><b><i></i></b></div><div class="tg gr" style="left:368.2px;top:445.8px"></div><div class="bar g" style="left:392.6px;top:303.0px;width:128.6px"><b><i></i></b></div><div class="bar g" style="left:392.6px;top:337.5px;width:128.6px"><b><i></i></b></div><div class="bar g" style="left:392.6px;top:372.0px;width:128.6px"><b><i></i></b></div><div class="bar g" style="left:392.6px;top:406.5px;width:128.6px"><b><i></i></b></div><div class="tg gr" style="left:507.8px;top:411.3px"></div><div class="bar g" style="left:532.3px;top:303.0px;width:128.6px"><b><i></i></b></div><div class="bar g" style="left:532.3px;top:337.5px;width:128.6px"><b><i></i></b></div><div class="bar g" style="left:532.3px;top:372.0px;width:128.6px"><b><i></i></b></div><div class="bar g" style="left:532.3px;top:406.5px;width:128.6px"><b><i></i></b></div><div class="tg gr" style="left:647.5px;top:411.3px"></div><div class="bar g" style="left:672.3px;top:303.0px;width:128.6px"><b><i></i></b></div><div class="tg bk" style="left:787.5px;top:307.8px"></div><div class="bar g" style="left:672.3px;top:337.5px;width:128.6px"><b><i></i></b></div><div class="tg gr" style="left:787.5px;top:342.3px"></div><div class="tg ye" style="left:778.9px;top:342.3px"></div><div class="bar g" style="left:672.3px;top:372.0px;width:128.6px"><b><i></i></b></div><div class="tg bk" style="left:787.5px;top:376.8px"></div><div class="bar g" style="left:672.3px;top:406.5px;width:128.6px"><b><i></i></b></div><div class="tg gr" style="left:787.5px;top:411.3px"></div><svg class="a tx" style="left:0;top:0" width="1000" height="563"><text x="13.00" y="8.24" font-size="6.6" fill="#fff" textLength="375.50" lengthAdjust="spacing" stroke="#fff" stroke-width="0.07">Sentinel (Dark Blast - Stone Armor - Mu mastery),v2.mbd - Mids&#x27; Reborn v3.6.6  (Homecoming Issue: 27, Page: 7 - DBVersion: 2024.2.717)</text><text x="8.00" y="21.05" font-size="6.9" fill="#000" textLength="9.20" lengthAdjust="spacing" stroke="#000" stroke-width="0.07">File</text><text x="27.00" y="21.05" font-size="6.9" fill="#000" textLength="22.00" lengthAdjust="spacing" stroke="#000" stroke-width="0.07">Options</text><text x="58.80" y="21.05" font-size="6.9" fill="#000" textLength="36.20" lengthAdjust="spacing" stroke="#000" stroke-width="0.07">Build Sharing</text><text x="105.00" y="21.05" font-size="6.9" fill="#000" textLength="59.50" lengthAdjust="spacing" stroke="#000" stroke-width="0.07">Slots / Enhancements</text><text x="174.00" y="21.05" font-size="6.9" fill="#000" textLength="13.50" lengthAdjust="spacing" stroke="#000" stroke-width="0.07">View</text><text x="197.00" y="21.05" font-size="6.9" fill="#000" textLength="26.00" lengthAdjust="spacing" stroke="#000" stroke-width="0.07">Windows</text><text x="232.80" y="21.05" font-size="6.9" fill="#000" textLength="12.70" lengthAdjust="spacing" stroke="#000" stroke-width="0.07">Help</text><text x="289.80" y="21.05" font-size="6.9" fill="#000" textLength="67.70" lengthAdjust="spacing" stroke="#000" stroke-width="0.07">Enemy Relative Level: +3</text><text x="972.50" y="21.05" font-size="6.9" fill="#000" textLength="22.50" lengthAdjust="spacing" stroke="#000" stroke-width="0.07">Donate?</text><text x="3.00" y="34.31" font-size="6.8" fill="#fff" textLength="187.00" lengthAdjust="spacing" font-weight="bold" stroke="#fff" stroke-width="0.3">Corrupted Darkflame: Magic Sentinel (Dark Blast / Stone Armor)</text><text x="23.70" y="63.46" font-size="8.4" fill="#fff" textLength="22.60" lengthAdjust="spacing" font-weight="bold" stroke="#4a4a4a" stroke-width="1.0" paint-order="stroke" stroke-linejoin="round">Name:</text><text x="8.50" y="77.56" font-size="8.4" fill="#fff" textLength="37.80" lengthAdjust="spacing" font-weight="bold" stroke="#4a4a4a" stroke-width="1.0" paint-order="stroke" stroke-linejoin="round">Archetype:</text><text x="22.50" y="90.46" font-size="8.4" fill="#fff" textLength="23.80" lengthAdjust="spacing" font-weight="bold" stroke="#4a4a4a" stroke-width="1.0" paint-order="stroke" stroke-linejoin="round">Origin:</text><text x="51.00" y="62.41" font-size="6.2" fill="#222" textLength="55.50" lengthAdjust="spacing" stroke="#222" stroke-width="0.07">Corrupted Darkflame</text><text x="74.00" y="76.92" font-size="7.4" fill="#0b1c4a" textLength="23.50" lengthAdjust="spacing" font-weight="bold" stroke="#0b1c4a" stroke-width="0.28">Sentinel</text><text x="62.00" y="89.31" font-size="6.2" fill="#222" textLength="16.00" lengthAdjust="spacing" stroke="#222" stroke-width="0.07">Magic</text><text x="144.27" y="61.91" font-size="7.1" fill="#0a1424" textLength="20.16" lengthAdjust="spacing" font-weight="bold" stroke="#0a1424" stroke-width="1.5" paint-order="stroke" stroke-linejoin="round">Normal</text><text x="144.27" y="61.91" font-size="7.1" fill="#fff" textLength="20.16" lengthAdjust="spacing" font-weight="bold" stroke="#fff" stroke-width="0.22">Normal</text><text x="195.61" y="61.91" font-size="7.1" fill="#0a1424" textLength="33.48" lengthAdjust="spacing" font-weight="bold" stroke="#0a1424" stroke-width="1.5" paint-order="stroke" stroke-linejoin="round">Power / Slot</text><text x="195.61" y="61.91" font-size="7.1" fill="#fff" textLength="33.48" lengthAdjust="spacing" font-weight="bold" stroke="#fff" stroke-width="0.22">Power / Slot</text><text x="131.26" y="76.86" font-size="7.1" fill="#0a1424" textLength="46.17" lengthAdjust="spacing" font-weight="bold" stroke="#0a1424" stroke-width="1.5" paint-order="stroke" stroke-linejoin="round">View Active Sets</text><text x="131.26" y="76.86" font-size="7.1" fill="#fff" textLength="46.17" lengthAdjust="spacing" font-weight="bold" stroke="#fff" stroke-width="0.22">View Active Sets</text><text x="196.53" y="76.86" font-size="7.1" fill="#0a1424" textLength="31.64" lengthAdjust="spacing" font-weight="bold" stroke="#0a1424" stroke-width="1.5" paint-order="stroke" stroke-linejoin="round">View Totals</text><text x="196.53" y="76.86" font-size="7.1" fill="#fff" textLength="31.64" lengthAdjust="spacing" font-weight="bold" stroke="#fff" stroke-width="0.22">View Totals</text><text x="133.06" y="89.51" font-size="7.1" fill="#0a1424" textLength="42.58" lengthAdjust="spacing" font-weight="bold" stroke="#0a1424" stroke-width="1.5" paint-order="stroke" stroke-linejoin="round">Slot Levels: On</text><text x="133.06" y="89.51" font-size="7.1" fill="#fff" textLength="42.58" lengthAdjust="spacing" font-weight="bold" stroke="#fff" stroke-width="0.22">Slot Levels: On</text><text x="191.38" y="89.51" font-size="7.1" fill="#0a1424" textLength="41.94" lengthAdjust="spacing" font-weight="bold" stroke="#0a1424" stroke-width="1.5" paint-order="stroke" stroke-linejoin="round">67 slots placed</text><text x="191.38" y="89.51" font-size="7.1" fill="#fff" textLength="41.94" lengthAdjust="spacing" font-weight="bold" stroke="#fff" stroke-width="0.22">67 slots placed</text><text x="319.33" y="35.76" font-size="6.8" fill="#0a1424" textLength="43.24" lengthAdjust="spacing" font-weight="bold" stroke="#0a1424" stroke-width="1.5" paint-order="stroke" stroke-linejoin="round">Team Members</text><text x="319.33" y="35.76" font-size="6.8" fill="#fff" textLength="43.24" lengthAdjust="spacing" font-weight="bold" stroke="#fff" stroke-width="0.22">Team Members</text><text x="391.72" y="35.76" font-size="6.8" fill="#0a1424" textLength="13.67" lengthAdjust="spacing" font-weight="bold" stroke="#0a1424" stroke-width="1.5" paint-order="stroke" stroke-linejoin="round">Hero</text><text x="391.72" y="35.76" font-size="6.8" fill="#fff" textLength="13.67" lengthAdjust="spacing" font-weight="bold" stroke="#fff" stroke-width="0.22">Hero</text><text x="450.48" y="35.76" font-size="6.8" fill="#0a1424" textLength="11.34" lengthAdjust="spacing" font-weight="bold" stroke="#0a1424" stroke-width="1.5" paint-order="stroke" stroke-linejoin="round">PvE</text><text x="450.48" y="35.76" font-size="6.8" fill="#fff" textLength="11.34" lengthAdjust="spacing" font-weight="bold" stroke="#fff" stroke-width="0.22">PvE</text><text x="496.08" y="35.76" font-size="6.8" fill="#0a1424" textLength="35.34" lengthAdjust="spacing" font-weight="bold" stroke="#0a1424" stroke-width="1.5" paint-order="stroke" stroke-linejoin="round">Recipes: Off</text><text x="496.08" y="35.76" font-size="6.8" fill="#fff" textLength="35.34" lengthAdjust="spacing" font-weight="bold" stroke="#fff" stroke-width="0.22">Recipes: Off</text><text x="556.02" y="35.76" font-size="6.8" fill="#0a1424" textLength="30.66" lengthAdjust="spacing" font-weight="bold" stroke="#0a1424" stroke-width="1.5" paint-order="stroke" stroke-linejoin="round">Popup: On</text><text x="556.02" y="35.76" font-size="6.8" fill="#fff" textLength="30.66" lengthAdjust="spacing" font-weight="bold" stroke="#fff" stroke-width="0.22">Popup: On</text><text x="375.21" y="49.06" font-size="6.8" fill="#0a1424" textLength="46.69" lengthAdjust="spacing" font-weight="bold" stroke="#0a1424" stroke-width="1.5" paint-order="stroke" stroke-linejoin="round">Prestige Powers</text><text x="375.21" y="49.06" font-size="6.8" fill="#fff" textLength="46.69" lengthAdjust="spacing" font-weight="bold" stroke="#fff" stroke-width="0.22">Prestige Powers</text><text x="441.14" y="49.06" font-size="6.8" fill="#0a1424" textLength="30.01" lengthAdjust="spacing" font-weight="bold" stroke="#0a1424" stroke-width="1.5" paint-order="stroke" stroke-linejoin="round">Accolades</text><text x="441.14" y="49.06" font-size="6.8" fill="#fff" textLength="30.01" lengthAdjust="spacing" font-weight="bold" stroke="#fff" stroke-width="0.22">Accolades</text><text x="488.91" y="49.06" font-size="6.8" fill="#0a1424" textLength="49.68" lengthAdjust="spacing" font-weight="bold" stroke="#0a1424" stroke-width="1.5" paint-order="stroke" stroke-linejoin="round">Incarnate Powers</text><text x="488.91" y="49.06" font-size="6.8" fill="#fff" textLength="49.68" lengthAdjust="spacing" font-weight="bold" stroke="#fff" stroke-width="0.22">Incarnate Powers</text><text x="552.07" y="49.06" font-size="6.8" fill="#0a1424" textLength="38.57" lengthAdjust="spacing" font-weight="bold" stroke="#0a1424" stroke-width="1.5" paint-order="stroke" stroke-linejoin="round">Temp Powers</text><text x="552.07" y="49.06" font-size="6.8" fill="#fff" textLength="38.57" lengthAdjust="spacing" font-weight="bold" stroke="#fff" stroke-width="0.22">Temp Powers</text><text x="24.49" y="105.17" font-size="5.8" fill="#fff" textLength="42.42" lengthAdjust="spacing" font-weight="bold" stroke="#fff" stroke-width="0.12">Primary Power Set</text><text x="21.80" y="114.94" font-size="6.6" fill="#222" textLength="25.83" lengthAdjust="spacing" stroke="#222" stroke-width="0.07">Dark Blast</text><text x="99.96" y="105.17" font-size="5.8" fill="#fff" textLength="49.08" lengthAdjust="spacing" font-weight="bold" stroke="#fff" stroke-width="0.12">Secondary Power Set</text><text x="101.20" y="114.94" font-size="6.6" fill="#222" textLength="31.12" lengthAdjust="spacing" stroke="#222" stroke-width="0.07">Stone Armor</text><text x="195.10" y="105.17" font-size="5.8" fill="#fff" textLength="14.40" lengthAdjust="spacing" font-weight="bold" stroke="#fff" stroke-width="0.12">Pool 1</text><text x="180.80" y="114.94" font-size="6.6" fill="#222" textLength="19.93" lengthAdjust="spacing" stroke="#222" stroke-width="0.07">Leaping</text><text x="10.50" y="126.31" font-size="7.1" fill="#6c9ae6" textLength="31.91" lengthAdjust="spacing" font-weight="bold" stroke="#6c9ae6" stroke-width="0.28">Dark Blast</text><text x="10.50" y="135.18" font-size="7.1" fill="#f2c200" textLength="20.42" lengthAdjust="spacing" font-weight="bold" stroke="#f2c200" stroke-width="0.28">Gloom</text><text x="10.50" y="144.05" font-size="7.1" fill="#f2c200" textLength="46.11" lengthAdjust="spacing" font-weight="bold" stroke="#f2c200" stroke-width="0.28">Umbral Torrent</text><text x="10.50" y="152.92" font-size="7.1" fill="#6c9ae6" textLength="41.94" lengthAdjust="spacing" font-weight="bold" stroke="#6c9ae6" stroke-width="0.28">Abyssal Gaze</text><text x="10.50" y="161.79" font-size="7.1" fill="#6c9ae6" textLength="12.19" lengthAdjust="spacing" font-weight="bold" stroke="#6c9ae6" stroke-width="0.28">Aim</text><text x="10.50" y="170.66" font-size="7.1" fill="#6c9ae6" textLength="52.32" lengthAdjust="spacing" font-weight="bold" stroke="#6c9ae6" stroke-width="0.28">Dark Obliteration</text><text x="10.50" y="179.53" font-size="7.1" fill="#6c9ae6" textLength="51.61" lengthAdjust="spacing" font-weight="bold" stroke="#6c9ae6" stroke-width="0.28">Antumbral Beam</text><text x="10.50" y="188.40" font-size="7.1" fill="#6c9ae6" textLength="29.74" lengthAdjust="spacing" font-weight="bold" stroke="#6c9ae6" stroke-width="0.28">Life Drain</text><text x="10.50" y="197.27" font-size="7.1" fill="#6c9ae6" textLength="29.04" lengthAdjust="spacing" font-weight="bold" stroke="#6c9ae6" stroke-width="0.28">Blackstar</text><text x="90.50" y="126.31" font-size="7.1" fill="#6c9ae6" textLength="36.68" lengthAdjust="spacing" font-weight="bold" stroke="#6c9ae6" stroke-width="0.28">Rock Armor</text><text x="90.50" y="135.18" font-size="7.1" fill="#6c9ae6" textLength="33.33" lengthAdjust="spacing" font-weight="bold" stroke="#6c9ae6" stroke-width="0.28">Stone Skin</text><text x="90.50" y="144.05" font-size="7.1" fill="#6c9ae6" textLength="50.65" lengthAdjust="spacing" font-weight="bold" stroke="#6c9ae6" stroke-width="0.28">Earth&#x27;s Embrace</text><text x="90.50" y="152.92" font-size="7.1" fill="#6c9ae6" textLength="35.01" lengthAdjust="spacing" font-weight="bold" stroke="#6c9ae6" stroke-width="0.28">Terra Firma</text><text x="90.50" y="161.79" font-size="7.1" fill="#6c9ae6" textLength="22.21" lengthAdjust="spacing" font-weight="bold" stroke="#6c9ae6" stroke-width="0.28">Rooted</text><text x="90.50" y="170.66" font-size="7.1" fill="#6c9ae6" textLength="42.78" lengthAdjust="spacing" font-weight="bold" stroke="#6c9ae6" stroke-width="0.28">Crystal Armor</text><text x="90.50" y="179.53" font-size="7.1" fill="#6c9ae6" textLength="52.80" lengthAdjust="spacing" font-weight="bold" stroke="#6c9ae6" stroke-width="0.28">Brimstone Armor</text><text x="90.50" y="188.40" font-size="7.1" fill="#6c9ae6" textLength="26.17" lengthAdjust="spacing" font-weight="bold" stroke="#6c9ae6" stroke-width="0.28">Minerals</text><text x="90.50" y="197.27" font-size="7.1" fill="#f2c200" textLength="20.07" lengthAdjust="spacing" font-weight="bold" stroke="#f2c200" stroke-width="0.28">Geode</text><text x="169.50" y="127.41" font-size="7.1" fill="#f2c200" textLength="32.62" lengthAdjust="spacing" font-weight="bold" stroke="#f2c200" stroke-width="0.28">Jump Kick</text><text x="169.50" y="136.28" font-size="7.1" fill="#6c9ae6" textLength="52.67" lengthAdjust="spacing" font-weight="bold" stroke="#6c9ae6" stroke-width="0.28">Combat Jumping</text><text x="169.50" y="145.15" font-size="7.1" fill="#6c9ae6" textLength="37.27" lengthAdjust="spacing" font-weight="bold" stroke="#6c9ae6" stroke-width="0.28">Super Jump</text><text x="169.50" y="154.02" font-size="7.1" fill="#f2c200" textLength="33.33" lengthAdjust="spacing" font-weight="bold" stroke="#f2c200" stroke-width="0.28">Acrobatics</text><text x="169.50" y="162.89" font-size="7.1" fill="#f2c200" textLength="41.69" lengthAdjust="spacing" font-weight="bold" stroke="#f2c200" stroke-width="0.28">Spring Attack</text><text x="195.10" y="174.17" font-size="5.8" fill="#fff" textLength="14.40" lengthAdjust="spacing" font-weight="bold" stroke="#fff" stroke-width="0.12">Pool 2</text><text x="180.80" y="184.14" font-size="6.6" fill="#222" textLength="16.19" lengthAdjust="spacing" stroke="#222" stroke-width="0.07">Speed</text><text x="169.50" y="194.81" font-size="7.1" fill="#f2c200" textLength="18.28" lengthAdjust="spacing" font-weight="bold" stroke="#f2c200" stroke-width="0.28">Flurry</text><text x="169.50" y="203.68" font-size="7.1" fill="#6c9ae6" textLength="21.51" lengthAdjust="spacing" font-weight="bold" stroke="#6c9ae6" stroke-width="0.28">Hasten</text><text x="169.50" y="212.55" font-size="7.1" fill="#f2c200" textLength="39.43" lengthAdjust="spacing" font-weight="bold" stroke="#f2c200" stroke-width="0.28">Super Speed</text><text x="169.50" y="221.42" font-size="7.1" fill="#5c5c5c" textLength="25.07" lengthAdjust="spacing" font-weight="bold" stroke="#5c5c5c" stroke-width="0.28">Burnout</text><text x="169.50" y="230.29" font-size="7.1" fill="#5c5c5c" textLength="30.81" lengthAdjust="spacing" font-weight="bold" stroke="#5c5c5c" stroke-width="0.28">Whirlwind</text><text x="195.10" y="241.37" font-size="5.8" fill="#fff" textLength="14.40" lengthAdjust="spacing" font-weight="bold" stroke="#fff" stroke-width="0.12">Pool 3</text><text x="180.80" y="251.34" font-size="6.6" fill="#222" textLength="19.92" lengthAdjust="spacing" stroke="#222" stroke-width="0.07">Fighting</text><text x="169.50" y="261.91" font-size="7.1" fill="#6c9ae6" textLength="21.86" lengthAdjust="spacing" font-weight="bold" stroke="#6c9ae6" stroke-width="0.28">Boxing</text><text x="169.50" y="270.78" font-size="7.1" fill="#f2c200" textLength="13.62" lengthAdjust="spacing" font-weight="bold" stroke="#f2c200" stroke-width="0.28">Kick</text><text x="169.50" y="279.65" font-size="7.1" fill="#6c9ae6" textLength="19.22" lengthAdjust="spacing" font-weight="bold" stroke="#6c9ae6" stroke-width="0.28">Tough</text><text x="169.50" y="288.52" font-size="7.1" fill="#6c9ae6" textLength="20.32" lengthAdjust="spacing" font-weight="bold" stroke="#6c9ae6" stroke-width="0.28">Weave</text><text x="169.50" y="297.39" font-size="7.1" fill="#f2c200" textLength="39.78" lengthAdjust="spacing" font-weight="bold" stroke="#f2c200" stroke-width="0.28">Cross Punch</text><text x="195.10" y="308.47" font-size="5.8" fill="#fff" textLength="14.40" lengthAdjust="spacing" font-weight="bold" stroke="#fff" stroke-width="0.12">Pool 4</text><text x="180.80" y="318.74" font-size="6.6" fill="#222" textLength="27.71" lengthAdjust="spacing" stroke="#222" stroke-width="0.07">Leadership</text><text x="169.50" y="329.11" font-size="7.1" fill="#6c9ae6" textLength="33.70" lengthAdjust="spacing" font-weight="bold" stroke="#6c9ae6" stroke-width="0.28">Maneuvers</text><text x="169.50" y="337.98" font-size="7.1" fill="#f2c200" textLength="23.30" lengthAdjust="spacing" font-weight="bold" stroke="#f2c200" stroke-width="0.28">Assault</text><text x="169.50" y="346.85" font-size="7.1" fill="#6c9ae6" textLength="21.75" lengthAdjust="spacing" font-weight="bold" stroke="#6c9ae6" stroke-width="0.28">Tactics</text><text x="169.50" y="355.72" font-size="7.1" fill="#f2c200" textLength="33.70" lengthAdjust="spacing" font-weight="bold" stroke="#f2c200" stroke-width="0.28">Vengeance</text><text x="169.50" y="364.59" font-size="7.1" fill="#f2c200" textLength="39.66" lengthAdjust="spacing" font-weight="bold" stroke="#f2c200" stroke-width="0.28">Victory Rush</text><text x="180.56" y="375.77" font-size="5.8" fill="#fff" textLength="43.48" lengthAdjust="spacing" font-weight="bold" stroke="#fff" stroke-width="0.12">Ancillary/Epic Pool</text><text x="180.80" y="385.74" font-size="6.6" fill="#222" textLength="29.25" lengthAdjust="spacing" stroke="#222" stroke-width="0.07">Mu Mastery</text><text x="169.50" y="396.21" font-size="7.1" fill="#6c9ae6" textLength="59.14" lengthAdjust="spacing" font-weight="bold" stroke="#6c9ae6" stroke-width="0.28">Electrifying Fences</text><text x="169.50" y="405.08" font-size="7.1" fill="#f2c200" textLength="45.51" lengthAdjust="spacing" font-weight="bold" stroke="#f2c200" stroke-width="0.28">Thunder Strike</text><text x="169.50" y="413.95" font-size="7.1" fill="#f2c200" textLength="53.06" lengthAdjust="spacing" font-weight="bold" stroke="#f2c200" stroke-width="0.28">Electric Shackles</text><text x="169.50" y="422.82" font-size="7.1" fill="#f2c200" textLength="50.54" lengthAdjust="spacing" font-weight="bold" stroke="#f2c200" stroke-width="0.28">Static Discharge</text><text x="169.50" y="431.69" font-size="7.1" fill="#5c5c5c" textLength="47.42" lengthAdjust="spacing" font-weight="bold" stroke="#5c5c5c" stroke-width="0.28">Summon Adept</text><text x="17.50" y="209.75" font-size="7.2" fill="#fff" textLength="17.00" lengthAdjust="spacing" stroke="#fff" stroke-width="0.07">INFO</text><text x="49.80" y="210.58" font-size="7.0" fill="#fff" textLength="25.70" lengthAdjust="spacing" stroke="#fff" stroke-width="0.07">EFFECTS</text><text x="87.20" y="210.58" font-size="7.0" fill="#fff" textLength="22.80" lengthAdjust="spacing" stroke="#fff" stroke-width="0.07">TOTALS</text><text x="119.80" y="210.58" font-size="7.0" fill="#fff" textLength="31.70" lengthAdjust="spacing" stroke="#fff" stroke-width="0.07">ENHANCE</text><text x="15.20" y="220.71" font-size="6.2" fill="#fff" text-anchor="middle" font-weight="bold" stroke="#fff" stroke-width="0.15">F</text><text x="56.00" y="220.81" font-size="6.8" fill="#fff" textLength="59.50" lengthAdjust="spacing" font-weight="bold" stroke="#fff" stroke-width="0.28">Shield Wall: Defense</text><text x="11.00" y="230.94" font-size="6.3" fill="#12dede" textLength="59.50" lengthAdjust="spacing" font-weight="bold" stroke="#12dede" stroke-width="0.28">Invention Level: 50+5</text><text x="11.00" y="237.71" font-size="6.2" fill="#fff" textLength="139.50" lengthAdjust="spacing" stroke="#fff" stroke-width="0.07">Shift+Click to move slot. Right-Click to place enh.</text><text x="11.00" y="249.57" font-size="6.1" fill="#18e018" textLength="109.50" lengthAdjust="spacing" font-weight="bold" font-style="italic" stroke="#18e018" stroke-width="0.28">Defense enhancement (Sched. B: 31.9%)</text><text x="11.00" y="256.27" font-size="6.1" fill="#12dede" textLength="54.00" lengthAdjust="spacing" font-weight="bold" text-decoration="underline" stroke="#12dede" stroke-width="0.28">Shield Wall (10-50):</text><text x="14.00" y="263.27" font-size="6.1" fill="#fff" textLength="26.50" lengthAdjust="spacing" font-weight="bold" stroke="#fff" stroke-width="0.28">2 Slotted:</text><text x="42.30" y="263.27" font-size="6.1" fill="#fff" textLength="58.20" lengthAdjust="spacing" stroke="#fff" stroke-width="0.07">10% (0.5 HP/s) Regen</text><text x="14.00" y="270.37" font-size="6.1" fill="#fff" textLength="26.50" lengthAdjust="spacing" font-weight="bold" stroke="#fff" stroke-width="0.28">2 Slotted:</text><text x="42.30" y="270.37" font-size="6.1" fill="#fff" textLength="80.20" lengthAdjust="spacing" stroke="#fff" stroke-width="0.07">2.5% (0.04 /s) Recovery (PvP)</text><text x="14.00" y="277.57" font-size="6.1" fill="#fff" textLength="26.50" lengthAdjust="spacing" font-weight="bold" stroke="#fff" stroke-width="0.28">3 Slotted:</text><text x="42.30" y="277.57" font-size="6.1" fill="#fff" textLength="42.70" lengthAdjust="spacing" stroke="#fff" stroke-width="0.07">27.11 (2.25%)HP</text><text x="14.00" y="285.07" font-size="6.1" fill="#fff" textLength="26.50" lengthAdjust="spacing" font-weight="bold" stroke="#fff" stroke-width="0.28">3 Slotted:</text><text x="42.30" y="285.07" font-size="6.1" fill="#fff" textLength="97.20" lengthAdjust="spacing" stroke="#fff" stroke-width="0.07">MezRes(Repel) 1000% (8% chance)</text><text x="11.00" y="292.27" font-size="6.1" fill="#fff" textLength="14.50" lengthAdjust="spacing" stroke="#fff" stroke-width="0.07">(PvP)</text><text x="13.00" y="303.44" font-size="6.0" fill="#bcd4ff" textLength="25.03" lengthAdjust="spacing" stroke="#bcd4ff" stroke-width="0.07">End Cost:</text><text x="39.61" y="303.44" font-size="6.0" fill="#22d822" textLength="28.83" lengthAdjust="spacing" stroke="#22d822" stroke-width="0.07">0.1/s (0.21)</text><text x="89.00" y="313.64" font-size="6.0" fill="#bcd4ff" textLength="27.24" lengthAdjust="spacing" stroke="#bcd4ff" stroke-width="0.07">Cast Time:</text><text x="117.82" y="313.64" font-size="6.0" fill="#fff" textLength="17.11" lengthAdjust="spacing" stroke="#fff" stroke-width="0.07">1.188s</text><text x="13.00" y="324.14" font-size="6.0" fill="#bcd4ff" textLength="26.30" lengthAdjust="spacing" stroke="#bcd4ff" stroke-width="0.07">Recharge:</text><text x="40.88" y="324.14" font-size="6.0" fill="#22d822" textLength="22.49" lengthAdjust="spacing" stroke="#22d822" stroke-width="0.07">1.21s (4)</text><text x="89.00" y="324.14" font-size="6.0" fill="#bcd4ff" textLength="21.86" lengthAdjust="spacing" stroke="#bcd4ff" stroke-width="0.07">Activate:</text><text x="112.44" y="324.14" font-size="6.0" fill="#fff" textLength="10.77" lengthAdjust="spacing" stroke="#fff" stroke-width="0.07">0.5s</text><text x="13.00" y="334.74" font-size="6.0" fill="#bcd4ff" textLength="23.13" lengthAdjust="spacing" stroke="#bcd4ff" stroke-width="0.07">Duration:</text><text x="37.71" y="334.74" font-size="6.0" fill="#fff" textLength="13.94" lengthAdjust="spacing" stroke="#fff" stroke-width="0.07">0.75s</text><text x="89.00" y="334.74" font-size="6.0" fill="#bcd4ff" textLength="25.66" lengthAdjust="spacing" stroke="#bcd4ff" stroke-width="0.07">Recovery:</text><text x="116.24" y="334.74" font-size="6.0" fill="#fff" textLength="23.44" lengthAdjust="spacing" stroke="#fff" stroke-width="0.07">20% (Sif)</text><text x="89.00" y="345.04" font-size="6.0" fill="#bcd4ff" textLength="26.19" lengthAdjust="spacing" stroke="#bcd4ff" stroke-width="0.07">ResEffect:</text><text x="116.77" y="345.04" font-size="6.0" fill="#fff" textLength="30.94" lengthAdjust="spacing" stroke="#fff" stroke-width="0.07">11.07% (Sif)</text><text x="70.80" y="361.28" font-size="7.0" fill="#fff" textLength="28.70" lengthAdjust="spacing" font-weight="bold" stroke="#fff" stroke-width="0.28">Damage:</text><text x="257.60" y="64.48" font-size="7.0" fill="#08101f" textLength="41.58" lengthAdjust="spacing" font-weight="bold" stroke="#08101f" stroke-width="0.32">(1) Dark Blast</text><text x="262.80" y="87.05" font-size="6.9" fill="#14e414" text-anchor="middle" font-weight="bold" stroke="#14e414" stroke-width="0.3">1</text><text x="275.76" y="87.05" font-size="6.9" fill="#14e414" textLength="7.17" lengthAdjust="spacing" font-weight="bold" stroke="#14e414" stroke-width="0.3">15</text><text x="292.31" y="87.05" font-size="6.9" fill="#14e414" textLength="7.17" lengthAdjust="spacing" font-weight="bold" stroke="#14e414" stroke-width="0.3">15</text><text x="308.86" y="87.05" font-size="6.9" fill="#14e414" textLength="7.17" lengthAdjust="spacing" font-weight="bold" stroke="#14e414" stroke-width="0.3">17</text><text x="325.41" y="87.05" font-size="6.9" fill="#14e414" textLength="7.17" lengthAdjust="spacing" font-weight="bold" stroke="#14e414" stroke-width="0.3">43</text><text x="341.96" y="87.05" font-size="6.9" fill="#14e414" textLength="7.17" lengthAdjust="spacing" font-weight="bold" stroke="#14e414" stroke-width="0.3">50</text><text x="257.60" y="98.88" font-size="7.0" fill="#08101f" textLength="46.35" lengthAdjust="spacing" font-weight="bold" stroke="#08101f" stroke-width="0.32">(1) Rock Armor</text><text x="259.30" y="105.71" font-size="6.8" fill="#06203c" textLength="7.01" lengthAdjust="spacing" font-weight="bold" stroke="rgba(4,24,52,0.75)" stroke-width="1.3" paint-order="stroke" stroke-linejoin="round">50</text><text x="259.30" y="105.71" font-size="6.8" fill="#08e4ec" textLength="7.01" lengthAdjust="spacing" font-weight="bold" stroke="#08e4ec" stroke-width="0.28">50</text><text x="262.80" y="121.45" font-size="6.9" fill="#14e414" text-anchor="middle" font-weight="bold" stroke="#14e414" stroke-width="0.3">1</text><text x="275.85" y="105.71" font-size="6.8" fill="#06203c" textLength="7.01" lengthAdjust="spacing" font-weight="bold" stroke="rgba(4,24,52,0.75)" stroke-width="1.3" paint-order="stroke" stroke-linejoin="round">50</text><text x="275.85" y="105.71" font-size="6.8" fill="#08e4ec" textLength="7.01" lengthAdjust="spacing" font-weight="bold" stroke="#08e4ec" stroke-width="0.28">50</text><text x="279.35" y="121.45" font-size="6.9" fill="#14e414" text-anchor="middle" font-weight="bold" stroke="#14e414" stroke-width="0.3">3</text><text x="292.40" y="105.71" font-size="6.8" fill="#06203c" textLength="7.01" lengthAdjust="spacing" font-weight="bold" stroke="rgba(4,24,52,0.75)" stroke-width="1.3" paint-order="stroke" stroke-linejoin="round">50</text><text x="292.40" y="105.71" font-size="6.8" fill="#08e4ec" textLength="7.01" lengthAdjust="spacing" font-weight="bold" stroke="#08e4ec" stroke-width="0.28">50</text><text x="295.90" y="121.45" font-size="6.9" fill="#14e414" text-anchor="middle" font-weight="bold" stroke="#14e414" stroke-width="0.3">3</text><text x="308.95" y="105.71" font-size="6.8" fill="#06203c" textLength="7.01" lengthAdjust="spacing" font-weight="bold" stroke="rgba(4,24,52,0.75)" stroke-width="1.3" paint-order="stroke" stroke-linejoin="round">50</text><text x="308.95" y="105.71" font-size="6.8" fill="#08e4ec" textLength="7.01" lengthAdjust="spacing" font-weight="bold" stroke="#08e4ec" stroke-width="0.28">50</text><text x="312.45" y="121.45" font-size="6.9" fill="#14e414" text-anchor="middle" font-weight="bold" stroke="#14e414" stroke-width="0.3">5</text><text x="325.50" y="105.71" font-size="6.8" fill="#06203c" textLength="7.01" lengthAdjust="spacing" font-weight="bold" stroke="rgba(4,24,52,0.75)" stroke-width="1.3" paint-order="stroke" stroke-linejoin="round">50</text><text x="325.50" y="105.71" font-size="6.8" fill="#08e4ec" textLength="7.01" lengthAdjust="spacing" font-weight="bold" stroke="#08e4ec" stroke-width="0.28">50</text><text x="329.00" y="121.45" font-size="6.9" fill="#14e414" text-anchor="middle" font-weight="bold" stroke="#14e414" stroke-width="0.3">9</text><text x="342.05" y="105.71" font-size="6.8" fill="#06203c" textLength="7.01" lengthAdjust="spacing" font-weight="bold" stroke="rgba(4,24,52,0.75)" stroke-width="1.3" paint-order="stroke" stroke-linejoin="round">50</text><text x="342.05" y="105.71" font-size="6.8" fill="#08e4ec" textLength="7.01" lengthAdjust="spacing" font-weight="bold" stroke="#08e4ec" stroke-width="0.28">50</text><text x="341.96" y="121.45" font-size="6.9" fill="#14e414" textLength="7.17" lengthAdjust="spacing" font-weight="bold" stroke="#14e414" stroke-width="0.3">45</text><text x="257.60" y="133.28" font-size="7.0" fill="#08101f" textLength="43.00" lengthAdjust="spacing" font-weight="bold" stroke="#08101f" stroke-width="0.32">(2) Stone Skin</text><text x="259.30" y="140.11" font-size="6.8" fill="#06203c" textLength="7.01" lengthAdjust="spacing" font-weight="bold" stroke="rgba(4,24,52,0.75)" stroke-width="1.3" paint-order="stroke" stroke-linejoin="round">50</text><text x="259.30" y="140.11" font-size="6.8" fill="#08e4ec" textLength="7.01" lengthAdjust="spacing" font-weight="bold" stroke="#08e4ec" stroke-width="0.28">50</text><text x="262.80" y="155.85" font-size="6.9" fill="#14e414" text-anchor="middle" font-weight="bold" stroke="#14e414" stroke-width="0.3">2</text><text x="275.85" y="140.11" font-size="6.8" fill="#06203c" textLength="7.01" lengthAdjust="spacing" font-weight="bold" stroke="rgba(4,24,52,0.75)" stroke-width="1.3" paint-order="stroke" stroke-linejoin="round">50</text><text x="275.85" y="140.11" font-size="6.8" fill="#08e4ec" textLength="7.01" lengthAdjust="spacing" font-weight="bold" stroke="#08e4ec" stroke-width="0.28">50</text><text x="279.35" y="155.85" font-size="6.9" fill="#14e414" text-anchor="middle" font-weight="bold" stroke="#14e414" stroke-width="0.3">5</text><text x="292.40" y="140.11" font-size="6.8" fill="#06203c" textLength="7.01" lengthAdjust="spacing" font-weight="bold" stroke="rgba(4,24,52,0.75)" stroke-width="1.3" paint-order="stroke" stroke-linejoin="round">50</text><text x="292.40" y="140.11" font-size="6.8" fill="#08e4ec" textLength="7.01" lengthAdjust="spacing" font-weight="bold" stroke="#08e4ec" stroke-width="0.28">50</text><text x="295.90" y="155.85" font-size="6.9" fill="#14e414" text-anchor="middle" font-weight="bold" stroke="#14e414" stroke-width="0.3">5</text><text x="308.95" y="140.11" font-size="6.8" fill="#06203c" textLength="7.01" lengthAdjust="spacing" font-weight="bold" stroke="rgba(4,24,52,0.75)" stroke-width="1.3" paint-order="stroke" stroke-linejoin="round">50</text><text x="308.95" y="140.11" font-size="6.8" fill="#08e4ec" textLength="7.01" lengthAdjust="spacing" font-weight="bold" stroke="#08e4ec" stroke-width="0.28">50</text><text x="312.45" y="155.85" font-size="6.9" fill="#14e414" text-anchor="middle" font-weight="bold" stroke="#14e414" stroke-width="0.3">7</text><text x="325.50" y="140.11" font-size="6.8" fill="#06203c" textLength="7.01" lengthAdjust="spacing" font-weight="bold" stroke="rgba(4,24,52,0.75)" stroke-width="1.3" paint-order="stroke" stroke-linejoin="round">50</text><text x="325.50" y="140.11" font-size="6.8" fill="#08e4ec" textLength="7.01" lengthAdjust="spacing" font-weight="bold" stroke="#08e4ec" stroke-width="0.28">50</text><text x="329.00" y="155.85" font-size="6.9" fill="#14e414" text-anchor="middle" font-weight="bold" stroke="#14e414" stroke-width="0.3">7</text><text x="342.05" y="140.11" font-size="6.8" fill="#06203c" textLength="7.01" lengthAdjust="spacing" font-weight="bold" stroke="rgba(4,24,52,0.75)" stroke-width="1.3" paint-order="stroke" stroke-linejoin="round">50</text><text x="342.05" y="140.11" font-size="6.8" fill="#08e4ec" textLength="7.01" lengthAdjust="spacing" font-weight="bold" stroke="#08e4ec" stroke-width="0.28">50</text><text x="345.55" y="155.85" font-size="6.9" fill="#14e414" text-anchor="middle" font-weight="bold" stroke="#14e414" stroke-width="0.3">9</text><text x="257.60" y="167.68" font-size="7.0" fill="#08101f" textLength="60.32" lengthAdjust="spacing" font-weight="bold" stroke="#08101f" stroke-width="0.32">(4) Earth&#x27;s Embrace</text><text x="259.30" y="174.51" font-size="6.8" fill="#06203c" textLength="7.01" lengthAdjust="spacing" font-weight="bold" stroke="rgba(4,24,52,0.75)" stroke-width="1.3" paint-order="stroke" stroke-linejoin="round">50</text><text x="259.30" y="174.51" font-size="6.8" fill="#08e4ec" textLength="7.01" lengthAdjust="spacing" font-weight="bold" stroke="#08e4ec" stroke-width="0.28">50</text><text x="262.80" y="190.25" font-size="6.9" fill="#14e414" text-anchor="middle" font-weight="bold" stroke="#14e414" stroke-width="0.3">4</text><text x="275.85" y="174.51" font-size="6.8" fill="#06203c" textLength="7.01" lengthAdjust="spacing" font-weight="bold" stroke="rgba(4,24,52,0.75)" stroke-width="1.3" paint-order="stroke" stroke-linejoin="round">50</text><text x="275.85" y="174.51" font-size="6.8" fill="#08e4ec" textLength="7.01" lengthAdjust="spacing" font-weight="bold" stroke="#08e4ec" stroke-width="0.28">50</text><text x="275.76" y="190.25" font-size="6.9" fill="#14e414" textLength="7.17" lengthAdjust="spacing" font-weight="bold" stroke="#14e414" stroke-width="0.3">17</text><text x="292.40" y="174.51" font-size="6.8" fill="#06203c" textLength="7.01" lengthAdjust="spacing" font-weight="bold" stroke="rgba(4,24,52,0.75)" stroke-width="1.3" paint-order="stroke" stroke-linejoin="round">50</text><text x="292.40" y="174.51" font-size="6.8" fill="#08e4ec" textLength="7.01" lengthAdjust="spacing" font-weight="bold" stroke="#08e4ec" stroke-width="0.28">50</text><text x="292.31" y="190.25" font-size="6.9" fill="#14e414" textLength="7.17" lengthAdjust="spacing" font-weight="bold" stroke="#14e414" stroke-width="0.3">17</text><text x="308.95" y="174.51" font-size="6.8" fill="#06203c" textLength="7.01" lengthAdjust="spacing" font-weight="bold" stroke="rgba(4,24,52,0.75)" stroke-width="1.3" paint-order="stroke" stroke-linejoin="round">50</text><text x="308.95" y="174.51" font-size="6.8" fill="#08e4ec" textLength="7.01" lengthAdjust="spacing" font-weight="bold" stroke="#08e4ec" stroke-width="0.28">50</text><text x="308.86" y="190.25" font-size="6.9" fill="#14e414" textLength="7.17" lengthAdjust="spacing" font-weight="bold" stroke="#14e414" stroke-width="0.3">19</text><text x="325.50" y="174.51" font-size="6.8" fill="#06203c" textLength="7.01" lengthAdjust="spacing" font-weight="bold" stroke="rgba(4,24,52,0.75)" stroke-width="1.3" paint-order="stroke" stroke-linejoin="round">50</text><text x="325.50" y="174.51" font-size="6.8" fill="#08e4ec" textLength="7.01" lengthAdjust="spacing" font-weight="bold" stroke="#08e4ec" stroke-width="0.28">50</text><text x="325.41" y="190.25" font-size="6.9" fill="#14e414" textLength="7.17" lengthAdjust="spacing" font-weight="bold" stroke="#14e414" stroke-width="0.3">19</text><text x="342.05" y="174.51" font-size="6.8" fill="#06203c" textLength="7.01" lengthAdjust="spacing" font-weight="bold" stroke="rgba(4,24,52,0.75)" stroke-width="1.3" paint-order="stroke" stroke-linejoin="round">50</text><text x="342.05" y="174.51" font-size="6.8" fill="#08e4ec" textLength="7.01" lengthAdjust="spacing" font-weight="bold" stroke="#08e4ec" stroke-width="0.28">50</text><text x="341.96" y="190.25" font-size="6.9" fill="#14e414" textLength="7.17" lengthAdjust="spacing" font-weight="bold" stroke="#14e414" stroke-width="0.3">21</text><text x="257.60" y="202.08" font-size="7.0" fill="#08101f" textLength="51.38" lengthAdjust="spacing" font-weight="bold" stroke="#08101f" stroke-width="0.32">(6) Abyssal Gaze</text><text x="259.30" y="208.91" font-size="6.8" fill="#06203c" textLength="7.01" lengthAdjust="spacing" font-weight="bold" stroke="rgba(4,24,52,0.75)" stroke-width="1.3" paint-order="stroke" stroke-linejoin="round">35</text><text x="259.30" y="208.91" font-size="6.8" fill="#14e414" textLength="7.01" lengthAdjust="spacing" font-weight="bold" stroke="#14e414" stroke-width="0.28">35</text><text x="262.80" y="224.65" font-size="6.9" fill="#14e414" text-anchor="middle" font-weight="bold" stroke="#14e414" stroke-width="0.3">6</text><text x="275.85" y="208.91" font-size="6.8" fill="#06203c" textLength="7.01" lengthAdjust="spacing" font-weight="bold" stroke="rgba(4,24,52,0.75)" stroke-width="1.3" paint-order="stroke" stroke-linejoin="round">50</text><text x="275.85" y="208.91" font-size="6.8" fill="#08e4ec" textLength="7.01" lengthAdjust="spacing" font-weight="bold" stroke="#08e4ec" stroke-width="0.28">50</text><text x="279.35" y="224.65" font-size="6.9" fill="#14e414" text-anchor="middle" font-weight="bold" stroke="#14e414" stroke-width="0.3">9</text><text x="292.40" y="208.91" font-size="6.8" fill="#06203c" textLength="7.01" lengthAdjust="spacing" font-weight="bold" stroke="rgba(4,24,52,0.75)" stroke-width="1.3" paint-order="stroke" stroke-linejoin="round">50</text><text x="292.40" y="208.91" font-size="6.8" fill="#08e4ec" textLength="7.01" lengthAdjust="spacing" font-weight="bold" stroke="#08e4ec" stroke-width="0.28">50</text><text x="292.49" y="224.65" font-size="6.9" fill="#14e414" textLength="6.82" lengthAdjust="spacing" font-weight="bold" stroke="#14e414" stroke-width="0.3">11</text><text x="308.95" y="208.91" font-size="6.8" fill="#06203c" textLength="7.01" lengthAdjust="spacing" font-weight="bold" stroke="rgba(4,24,52,0.75)" stroke-width="1.3" paint-order="stroke" stroke-linejoin="round">50</text><text x="308.95" y="208.91" font-size="6.8" fill="#08e4ec" textLength="7.01" lengthAdjust="spacing" font-weight="bold" stroke="#08e4ec" stroke-width="0.28">50</text><text x="309.04" y="224.65" font-size="6.9" fill="#14e414" textLength="6.82" lengthAdjust="spacing" font-weight="bold" stroke="#14e414" stroke-width="0.3">11</text><text x="325.50" y="208.91" font-size="6.8" fill="#06203c" textLength="7.01" lengthAdjust="spacing" font-weight="bold" stroke="rgba(4,24,52,0.75)" stroke-width="1.3" paint-order="stroke" stroke-linejoin="round">50</text><text x="325.50" y="208.91" font-size="6.8" fill="#08e4ec" textLength="7.01" lengthAdjust="spacing" font-weight="bold" stroke="#08e4ec" stroke-width="0.28">50</text><text x="325.41" y="224.65" font-size="6.9" fill="#14e414" textLength="7.17" lengthAdjust="spacing" font-weight="bold" stroke="#14e414" stroke-width="0.3">13</text><text x="342.05" y="208.91" font-size="6.8" fill="#06203c" textLength="7.01" lengthAdjust="spacing" font-weight="bold" stroke="rgba(4,24,52,0.75)" stroke-width="1.3" paint-order="stroke" stroke-linejoin="round">50</text><text x="342.05" y="208.91" font-size="6.8" fill="#08e4ec" textLength="7.01" lengthAdjust="spacing" font-weight="bold" stroke="#08e4ec" stroke-width="0.28">50</text><text x="341.96" y="224.65" font-size="6.9" fill="#14e414" textLength="7.17" lengthAdjust="spacing" font-weight="bold" stroke="#14e414" stroke-width="0.3">13</text><text x="257.60" y="236.48" font-size="7.0" fill="#08101f" textLength="21.62" lengthAdjust="spacing" font-weight="bold" stroke="#08101f" stroke-width="0.32">(8) Aim</text><text x="259.30" y="243.31" font-size="6.8" fill="#06203c" textLength="7.01" lengthAdjust="spacing" font-weight="bold" stroke="rgba(4,24,52,0.75)" stroke-width="1.3" paint-order="stroke" stroke-linejoin="round">50</text><text x="259.30" y="243.31" font-size="6.8" fill="#08e4ec" textLength="7.01" lengthAdjust="spacing" font-weight="bold" stroke="#08e4ec" stroke-width="0.28">50</text><text x="262.80" y="259.05" font-size="6.9" fill="#14e414" text-anchor="middle" font-weight="bold" stroke="#14e414" stroke-width="0.3">8</text><text x="275.85" y="243.31" font-size="6.8" fill="#06203c" textLength="7.01" lengthAdjust="spacing" font-weight="bold" stroke="rgba(4,24,52,0.75)" stroke-width="1.3" paint-order="stroke" stroke-linejoin="round">50</text><text x="275.85" y="243.31" font-size="6.8" fill="#08e4ec" textLength="7.01" lengthAdjust="spacing" font-weight="bold" stroke="#08e4ec" stroke-width="0.28">50</text><text x="275.76" y="259.05" font-size="6.9" fill="#14e414" textLength="7.17" lengthAdjust="spacing" font-weight="bold" stroke="#14e414" stroke-width="0.3">37</text><text x="397.20" y="64.48" font-size="7.0" fill="#08101f" textLength="65.80" lengthAdjust="spacing" font-weight="bold" stroke="#08101f" stroke-width="0.32">(10) Combat Jumping</text><text x="398.90" y="71.31" font-size="6.8" fill="#06203c" textLength="7.01" lengthAdjust="spacing" font-weight="bold" stroke="rgba(4,24,52,0.75)" stroke-width="1.3" paint-order="stroke" stroke-linejoin="round">50</text><text x="398.90" y="71.31" font-size="6.8" fill="#08e4ec" textLength="7.01" lengthAdjust="spacing" font-weight="bold" stroke="#08e4ec" stroke-width="0.28">50</text><text x="398.81" y="87.05" font-size="6.9" fill="#14e414" textLength="7.17" lengthAdjust="spacing" font-weight="bold" stroke="#14e414" stroke-width="0.3">10</text><text x="415.45" y="71.31" font-size="6.8" fill="#06203c" textLength="7.01" lengthAdjust="spacing" font-weight="bold" stroke="rgba(4,24,52,0.75)" stroke-width="1.3" paint-order="stroke" stroke-linejoin="round">30</text><text x="415.45" y="71.31" font-size="6.8" fill="#08e4ec" textLength="7.01" lengthAdjust="spacing" font-weight="bold" stroke="#08e4ec" stroke-width="0.28">30</text><text x="415.36" y="87.05" font-size="6.9" fill="#14e414" textLength="7.17" lengthAdjust="spacing" font-weight="bold" stroke="#14e414" stroke-width="0.3">37</text><text x="397.20" y="98.88" font-size="7.0" fill="#08101f" textLength="65.59" lengthAdjust="spacing" font-weight="bold" stroke="#08101f" stroke-width="0.32">(12) Dark Obliteration</text><text x="398.81" y="121.45" font-size="6.9" fill="#14e414" textLength="7.17" lengthAdjust="spacing" font-weight="bold" stroke="#14e414" stroke-width="0.3">12</text><text x="415.36" y="121.45" font-size="6.9" fill="#14e414" textLength="7.17" lengthAdjust="spacing" font-weight="bold" stroke="#14e414" stroke-width="0.3">23</text><text x="431.91" y="121.45" font-size="6.9" fill="#14e414" textLength="7.17" lengthAdjust="spacing" font-weight="bold" stroke="#14e414" stroke-width="0.3">31</text><text x="448.46" y="121.45" font-size="6.9" fill="#14e414" textLength="7.17" lengthAdjust="spacing" font-weight="bold" stroke="#14e414" stroke-width="0.3">33</text><text x="465.01" y="121.45" font-size="6.9" fill="#14e414" textLength="7.17" lengthAdjust="spacing" font-weight="bold" stroke="#14e414" stroke-width="0.3">33</text><text x="481.56" y="121.45" font-size="6.9" fill="#14e414" textLength="7.17" lengthAdjust="spacing" font-weight="bold" stroke="#14e414" stroke-width="0.3">45</text><text x="397.20" y="133.28" font-size="7.0" fill="#08101f" textLength="48.27" lengthAdjust="spacing" font-weight="bold" stroke="#08101f" stroke-width="0.32">(14) Terra Firma</text><text x="398.90" y="140.11" font-size="6.8" fill="#06203c" textLength="7.01" lengthAdjust="spacing" font-weight="bold" stroke="rgba(4,24,52,0.75)" stroke-width="1.3" paint-order="stroke" stroke-linejoin="round">33</text><text x="398.90" y="140.11" font-size="6.8" fill="#14e414" textLength="7.01" lengthAdjust="spacing" font-weight="bold" stroke="#14e414" stroke-width="0.28">33</text><text x="398.81" y="155.85" font-size="6.9" fill="#14e414" textLength="7.17" lengthAdjust="spacing" font-weight="bold" stroke="#14e414" stroke-width="0.3">14</text><text x="397.20" y="167.68" font-size="7.0" fill="#08101f" textLength="35.47" lengthAdjust="spacing" font-weight="bold" stroke="#08101f" stroke-width="0.32">(16) Rooted</text><text x="397.20" y="202.08" font-size="7.0" fill="#08101f" textLength="56.04" lengthAdjust="spacing" font-weight="bold" stroke="#08101f" stroke-width="0.32">(18) Crystal Armor</text><text x="397.20" y="236.48" font-size="7.0" fill="#08101f" textLength="64.63" lengthAdjust="spacing" font-weight="bold" stroke="#08101f" stroke-width="0.32">(20) Antumbral Beam</text><text x="536.90" y="64.48" font-size="7.0" fill="#08101f" textLength="43.01" lengthAdjust="spacing" font-weight="bold" stroke="#08101f" stroke-width="0.32">(22) Life Drain</text><text x="538.60" y="71.31" font-size="6.8" fill="#06203c" textLength="7.01" lengthAdjust="spacing" font-weight="bold" stroke="rgba(4,24,52,0.75)" stroke-width="1.3" paint-order="stroke" stroke-linejoin="round">50</text><text x="538.60" y="71.31" font-size="6.8" fill="#08e4ec" textLength="7.01" lengthAdjust="spacing" font-weight="bold" stroke="#08e4ec" stroke-width="0.28">50</text><text x="538.51" y="87.05" font-size="6.9" fill="#14e414" textLength="7.17" lengthAdjust="spacing" font-weight="bold" stroke="#14e414" stroke-width="0.3">22</text><text x="555.15" y="71.31" font-size="6.8" fill="#06203c" textLength="7.01" lengthAdjust="spacing" font-weight="bold" stroke="rgba(4,24,52,0.75)" stroke-width="1.3" paint-order="stroke" stroke-linejoin="round">22</text><text x="555.15" y="71.31" font-size="6.8" fill="#14e414" textLength="7.01" lengthAdjust="spacing" font-weight="bold" stroke="#14e414" stroke-width="0.28">22</text><text x="555.06" y="87.05" font-size="6.9" fill="#14e414" textLength="7.17" lengthAdjust="spacing" font-weight="bold" stroke="#14e414" stroke-width="0.3">23</text><text x="571.70" y="71.31" font-size="6.8" fill="#06203c" textLength="7.01" lengthAdjust="spacing" font-weight="bold" stroke="rgba(4,24,52,0.75)" stroke-width="1.3" paint-order="stroke" stroke-linejoin="round">50</text><text x="571.70" y="71.31" font-size="6.8" fill="#08e4ec" textLength="7.01" lengthAdjust="spacing" font-weight="bold" stroke="#08e4ec" stroke-width="0.28">50</text><text x="571.61" y="87.05" font-size="6.9" fill="#14e414" textLength="7.17" lengthAdjust="spacing" font-weight="bold" stroke="#14e414" stroke-width="0.3">39</text><text x="588.25" y="71.31" font-size="6.8" fill="#06203c" textLength="7.01" lengthAdjust="spacing" font-weight="bold" stroke="rgba(4,24,52,0.75)" stroke-width="1.3" paint-order="stroke" stroke-linejoin="round">50</text><text x="588.25" y="71.31" font-size="6.8" fill="#08e4ec" textLength="7.01" lengthAdjust="spacing" font-weight="bold" stroke="#08e4ec" stroke-width="0.28">50</text><text x="588.16" y="87.05" font-size="6.9" fill="#14e414" textLength="7.17" lengthAdjust="spacing" font-weight="bold" stroke="#14e414" stroke-width="0.3">39</text><text x="604.80" y="71.31" font-size="6.8" fill="#06203c" textLength="7.01" lengthAdjust="spacing" font-weight="bold" stroke="rgba(4,24,52,0.75)" stroke-width="1.3" paint-order="stroke" stroke-linejoin="round">30</text><text x="604.80" y="71.31" font-size="6.8" fill="#08e4ec" textLength="7.01" lengthAdjust="spacing" font-weight="bold" stroke="#08e4ec" stroke-width="0.28">30</text><text x="604.71" y="87.05" font-size="6.9" fill="#14e414" textLength="7.17" lengthAdjust="spacing" font-weight="bold" stroke="#14e414" stroke-width="0.3">39</text><text x="621.35" y="71.31" font-size="6.8" fill="#06203c" textLength="7.01" lengthAdjust="spacing" font-weight="bold" stroke="rgba(4,24,52,0.75)" stroke-width="1.3" paint-order="stroke" stroke-linejoin="round">30</text><text x="621.35" y="71.31" font-size="6.8" fill="#08e4ec" textLength="7.01" lengthAdjust="spacing" font-weight="bold" stroke="#08e4ec" stroke-width="0.28">30</text><text x="621.26" y="87.05" font-size="6.9" fill="#14e414" textLength="7.17" lengthAdjust="spacing" font-weight="bold" stroke="#14e414" stroke-width="0.3">40</text><text x="536.90" y="98.88" font-size="7.0" fill="#08101f" textLength="66.06" lengthAdjust="spacing" font-weight="bold" stroke="#08101f" stroke-width="0.32">(24) Brimstone Armor</text><text x="538.60" y="105.71" font-size="6.8" fill="#06203c" textLength="7.01" lengthAdjust="spacing" font-weight="bold" stroke="rgba(4,24,52,0.75)" stroke-width="1.3" paint-order="stroke" stroke-linejoin="round">40</text><text x="538.60" y="105.71" font-size="6.8" fill="#08e4ec" textLength="7.01" lengthAdjust="spacing" font-weight="bold" stroke="#08e4ec" stroke-width="0.28">40</text><text x="538.51" y="121.45" font-size="6.9" fill="#14e414" textLength="7.17" lengthAdjust="spacing" font-weight="bold" stroke="#14e414" stroke-width="0.3">24</text><text x="555.15" y="105.71" font-size="6.8" fill="#06203c" textLength="7.01" lengthAdjust="spacing" font-weight="bold" stroke="rgba(4,24,52,0.75)" stroke-width="1.3" paint-order="stroke" stroke-linejoin="round">40</text><text x="555.15" y="105.71" font-size="6.8" fill="#08e4ec" textLength="7.01" lengthAdjust="spacing" font-weight="bold" stroke="#08e4ec" stroke-width="0.28">40</text><text x="555.06" y="121.45" font-size="6.9" fill="#14e414" textLength="7.17" lengthAdjust="spacing" font-weight="bold" stroke="#14e414" stroke-width="0.3">25</text><text x="571.70" y="105.71" font-size="6.8" fill="#06203c" textLength="7.01" lengthAdjust="spacing" font-weight="bold" stroke="rgba(4,24,52,0.75)" stroke-width="1.3" paint-order="stroke" stroke-linejoin="round">40</text><text x="571.70" y="105.71" font-size="6.8" fill="#08e4ec" textLength="7.01" lengthAdjust="spacing" font-weight="bold" stroke="#08e4ec" stroke-width="0.28">40</text><text x="571.61" y="121.45" font-size="6.9" fill="#14e414" textLength="7.17" lengthAdjust="spacing" font-weight="bold" stroke="#14e414" stroke-width="0.3">31</text><text x="588.25" y="105.71" font-size="6.8" fill="#06203c" textLength="7.01" lengthAdjust="spacing" font-weight="bold" stroke="rgba(4,24,52,0.75)" stroke-width="1.3" paint-order="stroke" stroke-linejoin="round">40</text><text x="588.25" y="105.71" font-size="6.8" fill="#08e4ec" textLength="7.01" lengthAdjust="spacing" font-weight="bold" stroke="#08e4ec" stroke-width="0.28">40</text><text x="588.16" y="121.45" font-size="6.9" fill="#14e414" textLength="7.17" lengthAdjust="spacing" font-weight="bold" stroke="#14e414" stroke-width="0.3">34</text><text x="536.90" y="133.28" font-size="7.0" fill="#08101f" textLength="42.30" lengthAdjust="spacing" font-weight="bold" stroke="#08101f" stroke-width="0.32">(26) Blackstar</text><text x="538.60" y="140.11" font-size="6.8" fill="#06203c" textLength="7.01" lengthAdjust="spacing" font-weight="bold" stroke="rgba(4,24,52,0.75)" stroke-width="1.3" paint-order="stroke" stroke-linejoin="round">50</text><text x="538.60" y="140.11" font-size="6.8" fill="#08e4ec" textLength="7.01" lengthAdjust="spacing" font-weight="bold" stroke="#08e4ec" stroke-width="0.28">50</text><text x="538.51" y="155.85" font-size="6.9" fill="#14e414" textLength="7.17" lengthAdjust="spacing" font-weight="bold" stroke="#14e414" stroke-width="0.3">26</text><text x="555.15" y="140.11" font-size="6.8" fill="#06203c" textLength="7.01" lengthAdjust="spacing" font-weight="bold" stroke="rgba(4,24,52,0.75)" stroke-width="1.3" paint-order="stroke" stroke-linejoin="round">50</text><text x="555.15" y="140.11" font-size="6.8" fill="#08e4ec" textLength="7.01" lengthAdjust="spacing" font-weight="bold" stroke="#08e4ec" stroke-width="0.28">50</text><text x="555.06" y="155.85" font-size="6.9" fill="#14e414" textLength="7.17" lengthAdjust="spacing" font-weight="bold" stroke="#14e414" stroke-width="0.3">27</text><text x="571.70" y="140.11" font-size="6.8" fill="#06203c" textLength="7.01" lengthAdjust="spacing" font-weight="bold" stroke="rgba(4,24,52,0.75)" stroke-width="1.3" paint-order="stroke" stroke-linejoin="round">50</text><text x="571.70" y="140.11" font-size="6.8" fill="#08e4ec" textLength="7.01" lengthAdjust="spacing" font-weight="bold" stroke="#08e4ec" stroke-width="0.28">50</text><text x="571.61" y="155.85" font-size="6.9" fill="#14e414" textLength="7.17" lengthAdjust="spacing" font-weight="bold" stroke="#14e414" stroke-width="0.3">27</text><text x="588.25" y="140.11" font-size="6.8" fill="#06203c" textLength="7.01" lengthAdjust="spacing" font-weight="bold" stroke="rgba(4,24,52,0.75)" stroke-width="1.3" paint-order="stroke" stroke-linejoin="round">10</text><text x="588.25" y="140.11" font-size="6.8" fill="#08e4ec" textLength="7.01" lengthAdjust="spacing" font-weight="bold" stroke="#08e4ec" stroke-width="0.28">10</text><text x="588.16" y="155.85" font-size="6.9" fill="#14e414" textLength="7.17" lengthAdjust="spacing" font-weight="bold" stroke="#14e414" stroke-width="0.3">29</text><text x="604.80" y="140.11" font-size="6.8" fill="#06203c" textLength="7.01" lengthAdjust="spacing" font-weight="bold" stroke="rgba(4,24,52,0.75)" stroke-width="1.3" paint-order="stroke" stroke-linejoin="round">50</text><text x="604.80" y="140.11" font-size="6.8" fill="#08e4ec" textLength="7.01" lengthAdjust="spacing" font-weight="bold" stroke="#08e4ec" stroke-width="0.28">50</text><text x="604.71" y="155.85" font-size="6.9" fill="#14e414" textLength="7.17" lengthAdjust="spacing" font-weight="bold" stroke="#14e414" stroke-width="0.3">29</text><text x="621.35" y="140.11" font-size="6.8" fill="#06203c" textLength="7.01" lengthAdjust="spacing" font-weight="bold" stroke="rgba(4,24,52,0.75)" stroke-width="1.3" paint-order="stroke" stroke-linejoin="round">50</text><text x="621.35" y="140.11" font-size="6.8" fill="#08e4ec" textLength="7.01" lengthAdjust="spacing" font-weight="bold" stroke="#08e4ec" stroke-width="0.28">50</text><text x="621.26" y="155.85" font-size="6.9" fill="#14e414" textLength="7.17" lengthAdjust="spacing" font-weight="bold" stroke="#14e414" stroke-width="0.3">31</text><text x="536.90" y="167.68" font-size="7.0" fill="#08101f" textLength="39.43" lengthAdjust="spacing" font-weight="bold" stroke="#08101f" stroke-width="0.32">(28) Minerals</text><text x="536.90" y="202.08" font-size="7.0" fill="#08101f" textLength="34.77" lengthAdjust="spacing" font-weight="bold" stroke="#08101f" stroke-width="0.32">(30) Hasten</text><text x="536.90" y="236.48" font-size="7.0" fill="#08101f" textLength="35.12" lengthAdjust="spacing" font-weight="bold" stroke="#08101f" stroke-width="0.32">(32) Boxing</text><text x="676.90" y="64.48" font-size="7.0" fill="#08101f" textLength="32.48" lengthAdjust="spacing" font-weight="bold" stroke="#08101f" stroke-width="0.32">(35) Tough</text><text x="678.60" y="71.31" font-size="6.8" fill="#06203c" textLength="7.01" lengthAdjust="spacing" font-weight="bold" stroke="rgba(4,24,52,0.75)" stroke-width="1.3" paint-order="stroke" stroke-linejoin="round">50</text><text x="678.60" y="71.31" font-size="6.8" fill="#08e4ec" textLength="7.01" lengthAdjust="spacing" font-weight="bold" stroke="#08e4ec" stroke-width="0.28">50</text><text x="678.51" y="87.05" font-size="6.9" fill="#14e414" textLength="7.17" lengthAdjust="spacing" font-weight="bold" stroke="#14e414" stroke-width="0.3">35</text><text x="695.15" y="71.31" font-size="6.8" fill="#06203c" textLength="7.01" lengthAdjust="spacing" font-weight="bold" stroke="rgba(4,24,52,0.75)" stroke-width="1.3" paint-order="stroke" stroke-linejoin="round">50</text><text x="695.15" y="71.31" font-size="6.8" fill="#08e4ec" textLength="7.01" lengthAdjust="spacing" font-weight="bold" stroke="#08e4ec" stroke-width="0.28">50</text><text x="695.06" y="87.05" font-size="6.9" fill="#14e414" textLength="7.17" lengthAdjust="spacing" font-weight="bold" stroke="#14e414" stroke-width="0.3">40</text><text x="711.70" y="71.31" font-size="6.8" fill="#06203c" textLength="7.01" lengthAdjust="spacing" font-weight="bold" stroke="rgba(4,24,52,0.75)" stroke-width="1.3" paint-order="stroke" stroke-linejoin="round">40</text><text x="711.70" y="71.31" font-size="6.8" fill="#08e4ec" textLength="7.01" lengthAdjust="spacing" font-weight="bold" stroke="#08e4ec" stroke-width="0.28">40</text><text x="711.61" y="87.05" font-size="6.9" fill="#14e414" textLength="7.17" lengthAdjust="spacing" font-weight="bold" stroke="#14e414" stroke-width="0.3">42</text><text x="728.25" y="71.31" font-size="6.8" fill="#06203c" textLength="7.01" lengthAdjust="spacing" font-weight="bold" stroke="rgba(4,24,52,0.75)" stroke-width="1.3" paint-order="stroke" stroke-linejoin="round">40</text><text x="728.25" y="71.31" font-size="6.8" fill="#08e4ec" textLength="7.01" lengthAdjust="spacing" font-weight="bold" stroke="#08e4ec" stroke-width="0.28">40</text><text x="728.16" y="87.05" font-size="6.9" fill="#14e414" textLength="7.17" lengthAdjust="spacing" font-weight="bold" stroke="#14e414" stroke-width="0.3">43</text><text x="744.80" y="71.31" font-size="6.8" fill="#06203c" textLength="7.01" lengthAdjust="spacing" font-weight="bold" stroke="rgba(4,24,52,0.75)" stroke-width="1.3" paint-order="stroke" stroke-linejoin="round">30</text><text x="744.80" y="71.31" font-size="6.8" fill="#08e4ec" textLength="7.01" lengthAdjust="spacing" font-weight="bold" stroke="#08e4ec" stroke-width="0.28">30</text><text x="744.71" y="87.05" font-size="6.9" fill="#14e414" textLength="7.17" lengthAdjust="spacing" font-weight="bold" stroke="#14e414" stroke-width="0.3">50</text><text x="676.90" y="98.88" font-size="7.0" fill="#08101f" textLength="33.58" lengthAdjust="spacing" font-weight="bold" stroke="#08101f" stroke-width="0.32">(38) Weave</text><text x="678.60" y="105.71" font-size="6.8" fill="#06203c" textLength="7.01" lengthAdjust="spacing" font-weight="bold" stroke="rgba(4,24,52,0.75)" stroke-width="1.3" paint-order="stroke" stroke-linejoin="round">50</text><text x="678.60" y="105.71" font-size="6.8" fill="#08e4ec" textLength="7.01" lengthAdjust="spacing" font-weight="bold" stroke="#08e4ec" stroke-width="0.28">50</text><text x="678.51" y="121.45" font-size="6.9" fill="#14e414" textLength="7.17" lengthAdjust="spacing" font-weight="bold" stroke="#14e414" stroke-width="0.3">38</text><text x="695.15" y="105.71" font-size="6.8" fill="#06203c" textLength="7.01" lengthAdjust="spacing" font-weight="bold" stroke="rgba(4,24,52,0.75)" stroke-width="1.3" paint-order="stroke" stroke-linejoin="round">50</text><text x="695.15" y="105.71" font-size="6.8" fill="#08e4ec" textLength="7.01" lengthAdjust="spacing" font-weight="bold" stroke="#08e4ec" stroke-width="0.28">50</text><text x="695.06" y="121.45" font-size="6.9" fill="#14e414" textLength="7.17" lengthAdjust="spacing" font-weight="bold" stroke="#14e414" stroke-width="0.3">40</text><text x="711.70" y="105.71" font-size="6.8" fill="#06203c" textLength="7.01" lengthAdjust="spacing" font-weight="bold" stroke="rgba(4,24,52,0.75)" stroke-width="1.3" paint-order="stroke" stroke-linejoin="round">50</text><text x="711.70" y="105.71" font-size="6.8" fill="#08e4ec" textLength="7.01" lengthAdjust="spacing" font-weight="bold" stroke="#08e4ec" stroke-width="0.28">50</text><text x="711.61" y="121.45" font-size="6.9" fill="#14e414" textLength="7.17" lengthAdjust="spacing" font-weight="bold" stroke="#14e414" stroke-width="0.3">45</text><text x="728.25" y="105.71" font-size="6.8" fill="#06203c" textLength="7.01" lengthAdjust="spacing" font-weight="bold" stroke="rgba(4,24,52,0.75)" stroke-width="1.3" paint-order="stroke" stroke-linejoin="round">50</text><text x="728.25" y="105.71" font-size="6.8" fill="#08e4ec" textLength="7.01" lengthAdjust="spacing" font-weight="bold" stroke="#08e4ec" stroke-width="0.28">50</text><text x="728.16" y="121.45" font-size="6.9" fill="#14e414" textLength="7.17" lengthAdjust="spacing" font-weight="bold" stroke="#14e414" stroke-width="0.3">46</text><text x="676.90" y="133.28" font-size="7.0" fill="#08101f" textLength="72.40" lengthAdjust="spacing" font-weight="bold" stroke="#08101f" stroke-width="0.32">(41) Electrifying Fences</text><text x="678.60" y="140.11" font-size="6.8" fill="#06203c" textLength="7.01" lengthAdjust="spacing" font-weight="bold" stroke="rgba(4,24,52,0.75)" stroke-width="1.3" paint-order="stroke" stroke-linejoin="round">50</text><text x="678.60" y="140.11" font-size="6.8" fill="#08e4ec" textLength="7.01" lengthAdjust="spacing" font-weight="bold" stroke="#08e4ec" stroke-width="0.28">50</text><text x="678.51" y="155.85" font-size="6.9" fill="#14e414" textLength="7.17" lengthAdjust="spacing" font-weight="bold" stroke="#14e414" stroke-width="0.3">46</text><text x="695.15" y="140.11" font-size="6.8" fill="#06203c" textLength="7.01" lengthAdjust="spacing" font-weight="bold" stroke="rgba(4,24,52,0.75)" stroke-width="1.3" paint-order="stroke" stroke-linejoin="round">50</text><text x="695.15" y="140.11" font-size="6.8" fill="#08e4ec" textLength="7.01" lengthAdjust="spacing" font-weight="bold" stroke="#08e4ec" stroke-width="0.28">50</text><text x="695.06" y="155.85" font-size="6.9" fill="#14e414" textLength="7.17" lengthAdjust="spacing" font-weight="bold" stroke="#14e414" stroke-width="0.3">46</text><text x="711.70" y="140.11" font-size="6.8" fill="#06203c" textLength="7.01" lengthAdjust="spacing" font-weight="bold" stroke="rgba(4,24,52,0.75)" stroke-width="1.3" paint-order="stroke" stroke-linejoin="round">50</text><text x="711.70" y="140.11" font-size="6.8" fill="#08e4ec" textLength="7.01" lengthAdjust="spacing" font-weight="bold" stroke="#08e4ec" stroke-width="0.28">50</text><text x="711.61" y="155.85" font-size="6.9" fill="#14e414" textLength="7.17" lengthAdjust="spacing" font-weight="bold" stroke="#14e414" stroke-width="0.3">48</text><text x="728.25" y="140.11" font-size="6.8" fill="#06203c" textLength="7.01" lengthAdjust="spacing" font-weight="bold" stroke="rgba(4,24,52,0.75)" stroke-width="1.3" paint-order="stroke" stroke-linejoin="round">50</text><text x="728.25" y="140.11" font-size="6.8" fill="#08e4ec" textLength="7.01" lengthAdjust="spacing" font-weight="bold" stroke="#08e4ec" stroke-width="0.28">50</text><text x="728.16" y="155.85" font-size="6.9" fill="#14e414" textLength="7.17" lengthAdjust="spacing" font-weight="bold" stroke="#14e414" stroke-width="0.3">48</text><text x="744.80" y="140.11" font-size="6.8" fill="#06203c" textLength="7.01" lengthAdjust="spacing" font-weight="bold" stroke="rgba(4,24,52,0.75)" stroke-width="1.3" paint-order="stroke" stroke-linejoin="round">50</text><text x="744.80" y="140.11" font-size="6.8" fill="#08e4ec" textLength="7.01" lengthAdjust="spacing" font-weight="bold" stroke="#08e4ec" stroke-width="0.28">50</text><text x="744.71" y="155.85" font-size="6.9" fill="#14e414" textLength="7.17" lengthAdjust="spacing" font-weight="bold" stroke="#14e414" stroke-width="0.3">48</text><text x="676.90" y="167.68" font-size="7.0" fill="#08101f" textLength="48.90" lengthAdjust="spacing" font-weight="bold" stroke="#08101f" stroke-width="0.32">(44) Super Jump</text><text x="676.90" y="202.08" font-size="7.0" fill="#08101f" textLength="46.96" lengthAdjust="spacing" font-weight="bold" stroke="#08101f" stroke-width="0.32">(47) Maneuvers</text><text x="676.90" y="236.48" font-size="7.0" fill="#08101f" textLength="35.01" lengthAdjust="spacing" font-weight="bold" stroke="#08101f" stroke-width="0.32">(49) Tactics</text><text x="257.60" y="310.68" font-size="7.0" fill="#08101f" textLength="46.57" lengthAdjust="spacing" font-weight="bold" stroke="#08101f" stroke-width="0.32">(1) Opportunity</text><text x="257.60" y="345.18" font-size="7.0" fill="#08101f" textLength="25.08" lengthAdjust="spacing" font-weight="bold" stroke="#08101f" stroke-width="0.32">(1) Swift</text><text x="259.30" y="352.01" font-size="6.8" fill="#06203c" textLength="7.01" lengthAdjust="spacing" font-weight="bold" stroke="rgba(4,24,52,0.75)" stroke-width="1.3" paint-order="stroke" stroke-linejoin="round">50</text><text x="259.30" y="352.01" font-size="6.8" fill="#08e4ec" textLength="7.01" lengthAdjust="spacing" font-weight="bold" stroke="#08e4ec" stroke-width="0.28">50</text><text x="262.80" y="367.75" font-size="6.9" fill="#14e414" text-anchor="middle" font-weight="bold" stroke="#14e414" stroke-width="0.3">1</text><text x="257.60" y="379.68" font-size="7.0" fill="#08101f" textLength="59.97" lengthAdjust="spacing" font-weight="bold" stroke="#08101f" stroke-width="0.32">(16) Double Assault</text><text x="257.60" y="414.18" font-size="7.0" fill="#08101f" textLength="73.71" lengthAdjust="spacing" font-weight="bold" stroke="#08101f" stroke-width="0.32">(50) Vigor Core Paragon</text><text x="257.60" y="448.68" font-size="7.0" fill="#08101f" textLength="73.58" lengthAdjust="spacing" font-weight="bold" stroke="#08101f" stroke-width="0.32">(50) The Atlas Medallion</text><text x="397.20" y="310.68" font-size="7.0" fill="#08101f" textLength="27.24" lengthAdjust="spacing" font-weight="bold" stroke="#08101f" stroke-width="0.32">(1) Brawl</text><text x="397.20" y="345.18" font-size="7.0" fill="#08101f" textLength="30.10" lengthAdjust="spacing" font-weight="bold" stroke="#08101f" stroke-width="0.32">(1) Hurdle</text><text x="397.20" y="379.68" font-size="7.0" fill="#08101f" textLength="28.31" lengthAdjust="spacing" font-weight="bold" stroke="#08101f" stroke-width="0.32">(1) Sprint</text><text x="397.20" y="414.18" font-size="7.0" fill="#08101f" textLength="93.92" lengthAdjust="spacing" font-weight="bold" stroke="#08101f" stroke-width="0.32">(50) Freedom Phalanx Reserve</text><text x="536.90" y="310.68" font-size="7.0" fill="#08101f" textLength="23.65" lengthAdjust="spacing" font-weight="bold" stroke="#08101f" stroke-width="0.32">(1) Rest</text><text x="536.90" y="345.18" font-size="7.0" fill="#08101f" textLength="29.38" lengthAdjust="spacing" font-weight="bold" stroke="#08101f" stroke-width="0.32">(1) Health</text><text x="536.90" y="379.68" font-size="7.0" fill="#08101f" textLength="37.76" lengthAdjust="spacing" font-weight="bold" stroke="#08101f" stroke-width="0.32">(50) Ageless</text><text x="536.90" y="414.18" font-size="7.0" fill="#08101f" textLength="55.20" lengthAdjust="spacing" font-weight="bold" stroke="#08101f" stroke-width="0.32">(50) Portal Jockey</text><text x="676.90" y="310.68" font-size="7.0" fill="#08101f" textLength="23.65" lengthAdjust="spacing" font-weight="bold" stroke="#08101f" stroke-width="0.32">(1) Rest</text><text x="676.90" y="345.18" font-size="7.0" fill="#08101f" textLength="34.76" lengthAdjust="spacing" font-weight="bold" stroke="#08101f" stroke-width="0.32">(1) Stamina</text><text x="675.60" y="379.68" font-size="7.0" fill="#08101f" textLength="100.20" lengthAdjust="spacing" font-weight="bold" stroke="#08101f" stroke-width="0.32">(50) Assault Radial Embodiment</text><text x="676.90" y="414.18" font-size="7.0" fill="#08101f" textLength="86.26" lengthAdjust="spacing" font-weight="bold" stroke="#08101f" stroke-width="0.32">(50) Task Force Commander</text></svg>
<div class="a" style="left:295.2px;top:146px;width:409px;height:242px;border-radius:4px;background:#f9f9f9;overflow:hidden;box-shadow:0 0 0 0.5px rgba(90,90,90,0.5)"><div class="a" style="left:0;top:0;width:100%;height:15.6px;background:linear-gradient(90deg,#e6f0f9,#e9f5f6 60%,#eaf8f1)"></div><div class="a" style="left:0;top:15.6px;width:100%;height:11.4px;background:#f0f0f0"></div><div class="a" style="left:0;top:218.6px;width:100%;height:24px;background:#f0f0f0"></div></div><div class="a" style="left:300px;top:150.2px;width:7.6px;height:7.6px;border-radius:50%;background:radial-gradient(circle at 30% 38%,#c02828 0,#c02828 14%,transparent 18%),radial-gradient(circle at 42% 68%,#28a848 0,#28a848 13%,transparent 17%),radial-gradient(circle at 68% 55%,#3858d8 0,#3858d8 13%,transparent 17%),#141414"></div><svg class="a" style="left:693.4px;top:150.6px" width="6" height="6" viewBox="0 0 6 6"><path d="M0.4 0.4L5.6 5.6M5.6 0.4L0.4 5.6" stroke="#333" stroke-width="0.6"/></svg><div class="a" style="left:296.6px;top:163.2px;width:65.2px;height:9.8px;background:#f0f0f0;border:0.5px solid #e2e2e2"></div><div class="a" style="left:362px;top:161.8px;width:49.4px;height:11.6px;background:#f9f9f9;border:0.5px solid #e0e0e0;border-bottom:none"></div><div class="a" style="left:411.6px;top:163.2px;width:38.6px;height:9.8px;background:#f0f0f0;border:0.5px solid #e2e2e2"></div><div class="a" style="left:450.4px;top:163.2px;width:54px;height:9.8px;background:#f0f0f0;border:0.5px solid #e2e2e2"></div><div class="gb" style="left:299.6px;top:179.2px;width:279.19999999999993px;height:89.60000000000002px"></div><div class="a" style="left:302.8px;top:177.2px;width:54.59999999999999px;height:4px;background:#f9f9f9"></div><div class="gb" style="left:301.6px;top:277.8px;width:156.59999999999997px;height:58.80000000000001px"></div><div class="a" style="left:304.8px;top:275.8px;width:23.4px;height:4px;background:#f9f9f9"></div><div class="gb" style="left:461.4px;top:277.8px;width:117.39999999999998px;height:58.80000000000001px"></div><div class="a" style="left:464.8px;top:275.8px;width:48.9px;height:4px;background:#f9f9f9"></div><div class="gb" style="left:582.6px;top:179.2px;width:114.39999999999998px;height:153.2px"></div><div class="a" style="left:585.8px;top:177.2px;width:35.9px;height:4px;background:#f9f9f9"></div><div class="rd on" style="left:302.9px;top:257.8px"></div><div class="rd" style="left:390.9px;top:257.8px"></div><div class="rd" style="left:477.9px;top:257.8px"></div><div class="rd on" style="left:306.9px;top:312.8px"></div><div class="rd" style="left:306.9px;top:323.6px"></div><div class="cb on" style="left:467.0px;top:312.5px"><svg width="6.6" height="6.6" viewBox="0 0 6.6 6.6"><path d="M1.6 3.4L2.8 4.6L5 2.2" fill="none" stroke="#fff" stroke-width="0.7"/></svg></div><div class="cb on" style="left:467.0px;top:324.5px"><svg width="6.6" height="6.6" viewBox="0 0 6.6 6.6"><path d="M1.6 3.4L2.8 4.6L5 2.2" fill="none" stroke="#fff" stroke-width="0.7"/></svg></div><div class="cb on" style="left:301.59999999999997px;top:342.2px"><svg width="6.6" height="6.6" viewBox="0 0 6.6 6.6"><path d="M1.6 3.4L2.8 4.6L5 2.2" fill="none" stroke="#fff" stroke-width="0.7"/></svg></div><div class="a" style="left:587.2px;top:214.2px;width:107.4px;height:117.2px;background:#fff;border:0.5px solid #9c9c9c"></div><div class="a" style="left:685px;top:214.8px;width:9px;height:116px;background:#f0f0f0"></div><div class="a" style="left:689px;top:223.5px;width:1.3px;height:92px;background:#8a8a8a;border-radius:1px"></div><div class="cb" style="left:589.1px;top:215.99999999999997px"></div><div class="cb" style="left:589.1px;top:224.85999999999996px"></div><div class="cb" style="left:589.1px;top:233.71999999999997px"></div><div class="cb" style="left:589.1px;top:242.57999999999998px"></div><div class="cb" style="left:589.1px;top:251.43999999999997px"></div><div class="cb" style="left:589.1px;top:260.29999999999995px"></div><div class="cb" style="left:589.1px;top:269.15999999999997px"></div><div class="cb" style="left:589.1px;top:278.02px"></div><div class="cb" style="left:589.1px;top:286.88px"></div><div class="cb" style="left:589.1px;top:295.73999999999995px"></div><div class="cb" style="left:589.1px;top:304.59999999999997px"></div><div class="cb" style="left:589.1px;top:313.46px"></div><div class="cb" style="left:589.1px;top:322.31999999999994px"></div><div class="a" style="left:509px;top:371.2px;width:36.8px;height:11.6px;background:#fdfdfd;border:0.5px solid #d0d0d0;border-radius:2px"></div><div class="a" style="left:558.4px;top:371.2px;width:37.8px;height:11.8px;background:#fdfdfd;border:0.8px solid #2a7fd4;border-radius:2px"></div><svg class="a tx" style="left:0;top:0" width="1000" height="563"><text x="311.00" y="156.38" font-size="7.0" fill="#222" textLength="22.50" lengthAdjust="spacing" stroke="#222" stroke-width="0.07">Options</text><text x="300.80" y="169.94" font-size="6.3" fill="#1a1a1a" textLength="59.80" lengthAdjust="spacing" stroke="#1a1a1a" stroke-width="0.07">Enhancements &amp; View</text><text x="367.60" y="169.04" font-size="6.3" fill="#1a1a1a" textLength="42.20" lengthAdjust="spacing" stroke="#1a1a1a" stroke-width="0.07">Effects &amp; Maths</text><text x="415.00" y="169.94" font-size="6.3" fill="#1a1a1a" textLength="32.50" lengthAdjust="spacing" stroke="#1a1a1a" stroke-width="0.07">Drag &amp; Drop</text><text x="455.00" y="169.94" font-size="6.3" fill="#1a1a1a" textLength="45.50" lengthAdjust="spacing" stroke="#1a1a1a" stroke-width="0.07">Updates &amp; Paths</text><text x="304.00" y="181.44" font-size="6.3" fill="#1a1a1a" textLength="52.20" lengthAdjust="spacing" stroke="#1a1a1a" stroke-width="0.07">Chance of Damage:</text><text x="306.00" y="280.04" font-size="6.3" fill="#1a1a1a" textLength="21.00" lengthAdjust="spacing" stroke="#1a1a1a" stroke-width="0.07">Targets:</text><text x="466.00" y="280.04" font-size="6.3" fill="#1a1a1a" textLength="46.50" lengthAdjust="spacing" stroke="#1a1a1a" stroke-width="0.07">Invention Effects:</text><text x="587.00" y="181.44" font-size="6.3" fill="#1a1a1a" textLength="33.50" lengthAdjust="spacing" stroke="#1a1a1a" stroke-width="0.07">Suppression</text><text x="305.00" y="194.64" font-size="6.3" fill="#1a1a1a" textLength="243.50" lengthAdjust="spacing" stroke="#1a1a1a" stroke-width="0.07">Some attacks have a chance to deal additional damage. This damage can be calculated as...</text><text x="305.00" y="208.14" font-size="6.3" fill="#1a1a1a" textLength="141.50" lengthAdjust="spacing" stroke="#1a1a1a" stroke-width="0.07">Average - Extra damage is included based on chance.</text><text x="305.00" y="214.94" font-size="6.3" fill="#1a1a1a" textLength="118.00" lengthAdjust="spacing" stroke="#1a1a1a" stroke-width="0.07">Maximum - Extra damage is always included.</text><text x="305.00" y="221.74" font-size="6.3" fill="#1a1a1a" textLength="96.00" lengthAdjust="spacing" stroke="#1a1a1a" stroke-width="0.07">Minimum - Extra damage is ignored.</text><text x="305.00" y="235.34" font-size="6.3" fill="#1a1a1a" textLength="235.00" lengthAdjust="spacing" stroke="#1a1a1a" stroke-width="0.07">Note: This also affects how Scrapper damage is displayed with Critical Hit is toggled on.</text><text x="305.00" y="248.84" font-size="6.3" fill="#1a1a1a" textLength="149.50" lengthAdjust="spacing" stroke="#1a1a1a" stroke-width="0.07">Where an attack has a chance to do additional damage:</text><text x="312.60" y="263.64" font-size="6.3" fill="#1a1a1a" textLength="73.40" lengthAdjust="spacing" stroke="#1a1a1a" stroke-width="0.07">Average (Damage x Chance)</text><text x="401.00" y="263.64" font-size="6.3" fill="#1a1a1a" textLength="70.00" lengthAdjust="spacing" stroke="#1a1a1a" stroke-width="0.07">Maximum (Always Include)</text><text x="488.00" y="263.64" font-size="6.3" fill="#1a1a1a" textLength="85.00" lengthAdjust="spacing" stroke="#1a1a1a" stroke-width="0.07">Minimum (Ignore Extra Damage)</text><text x="307.80" y="287.74" font-size="6.3" fill="#1a1a1a" textLength="148.20" lengthAdjust="spacing" stroke="#1a1a1a" stroke-width="0.07">Some powers  have different effects when used against</text><text x="307.80" y="294.34" font-size="6.3" fill="#1a1a1a" textLength="147.70" lengthAdjust="spacing" stroke="#1a1a1a" stroke-width="0.07">players (Mez effects are a good example of this). Where</text><text x="307.80" y="300.94" font-size="6.3" fill="#1a1a1a" textLength="124.20" lengthAdjust="spacing" stroke="#1a1a1a" stroke-width="0.07">a power has different effects, which should be</text><text x="307.80" y="307.54" font-size="6.3" fill="#1a1a1a" textLength="27.70" lengthAdjust="spacing" stroke="#1a1a1a" stroke-width="0.07">displayed?</text><text x="317.20" y="318.64" font-size="6.3" fill="#1a1a1a" textLength="72.80" lengthAdjust="spacing" stroke="#1a1a1a" stroke-width="0.07">Show values for Mobs (PvE)</text><text x="317.20" y="329.44" font-size="6.3" fill="#1a1a1a" textLength="76.80" lengthAdjust="spacing" stroke="#1a1a1a" stroke-width="0.07">Show values for Players (PvP)</text><text x="466.00" y="288.74" font-size="6.3" fill="#1a1a1a" textLength="105.00" lengthAdjust="spacing" stroke="#1a1a1a" stroke-width="0.07">The effects of set bonusses and special</text><text x="466.00" y="295.54" font-size="6.3" fill="#1a1a1a" textLength="90.50" lengthAdjust="spacing" stroke="#1a1a1a" stroke-width="0.07">IO enhancements can be included</text><text x="466.00" y="302.34" font-size="6.3" fill="#1a1a1a" textLength="67.50" lengthAdjust="spacing" stroke="#1a1a1a" stroke-width="0.07">when stats are calculated.</text><text x="477.00" y="318.14" font-size="6.3" fill="#1a1a1a" textLength="77.50" lengthAdjust="spacing" stroke="#1a1a1a" stroke-width="0.07">Include Enhancement effects</text><text x="477.00" y="330.14" font-size="6.3" fill="#1a1a1a" textLength="67.50" lengthAdjust="spacing" stroke="#1a1a1a" stroke-width="0.07">Include Set Bonus effects</text><text x="311.20" y="347.64" font-size="6.3" fill="#1a1a1a" textLength="97.80" lengthAdjust="spacing" stroke="#1a1a1a" stroke-width="0.07">Use ArcanaTime for Animation Times</text><text x="587.00" y="195.54" font-size="6.3" fill="#1a1a1a" textLength="85.00" lengthAdjust="spacing" stroke="#1a1a1a" stroke-width="0.07">Some effects are suppressed on</text><text x="587.00" y="202.44" font-size="6.3" fill="#1a1a1a" textLength="93.00" lengthAdjust="spacing" stroke="#1a1a1a" stroke-width="0.07">specific conditions. You can enable</text><text x="587.00" y="209.34" font-size="6.3" fill="#1a1a1a" textLength="60.00" lengthAdjust="spacing" stroke="#1a1a1a" stroke-width="0.07">those conditions here.</text><text x="598.00" y="221.24" font-size="6.3" fill="#1a1a1a" textLength="14.34" lengthAdjust="spacing" stroke="#1a1a1a" stroke-width="0.07">None</text><text x="598.00" y="230.10" font-size="6.3" fill="#1a1a1a" textLength="12.34" lengthAdjust="spacing" stroke="#1a1a1a" stroke-width="0.07">Held</text><text x="598.00" y="238.96" font-size="6.3" fill="#1a1a1a" textLength="15.35" lengthAdjust="spacing" stroke="#1a1a1a" stroke-width="0.07">Sleep</text><text x="598.00" y="247.82" font-size="6.3" fill="#1a1a1a" textLength="22.35" lengthAdjust="spacing" stroke="#1a1a1a" stroke-width="0.07">Stunned</text><text x="598.00" y="256.68" font-size="6.3" fill="#1a1a1a" textLength="32.01" lengthAdjust="spacing" stroke="#1a1a1a" stroke-width="0.07">Immobilized</text><text x="598.00" y="265.54" font-size="6.3" fill="#1a1a1a" textLength="26.67" lengthAdjust="spacing" stroke="#1a1a1a" stroke-width="0.07">Terrorized</text><text x="598.00" y="274.40" font-size="6.3" fill="#1a1a1a" textLength="23.35" lengthAdjust="spacing" stroke="#1a1a1a" stroke-width="0.07">Knocked</text><text x="598.00" y="283.26" font-size="6.3" fill="#1a1a1a" textLength="23.35" lengthAdjust="spacing" stroke="#1a1a1a" stroke-width="0.07">Attacked</text><text x="598.00" y="292.12" font-size="6.3" fill="#1a1a1a" textLength="24.67" lengthAdjust="spacing" stroke="#1a1a1a" stroke-width="0.07">HitByFoe</text><text x="598.00" y="300.98" font-size="6.3" fill="#1a1a1a" textLength="50.68" lengthAdjust="spacing" stroke="#1a1a1a" stroke-width="0.07">MissionObjectClick</text><text x="598.00" y="309.84" font-size="6.3" fill="#1a1a1a" textLength="51.01" lengthAdjust="spacing" stroke="#1a1a1a" stroke-width="0.07">ActivateAttackClick</text><text x="598.00" y="318.70" font-size="6.3" fill="#1a1a1a" textLength="26.01" lengthAdjust="spacing" stroke="#1a1a1a" stroke-width="0.07">Damaged</text><text x="598.00" y="327.56" font-size="6.3" fill="#1a1a1a" textLength="23.68" lengthAdjust="spacing" stroke="#1a1a1a" stroke-width="0.07">Phased1</text><text x="518.00" y="379.14" font-size="6.3" fill="#1a1a1a" textLength="18.50" lengthAdjust="spacing" stroke="#1a1a1a" stroke-width="0.07">Cancel</text><text x="573.00" y="379.14" font-size="6.3" fill="#1a1a1a" textLength="8.50" lengthAdjust="spacing" stroke="#1a1a1a" stroke-width="0.07">OK</text></svg>
<div class="a" style="left:360.4px;top:362.6px;width:264px;height:8.8px;background:#fff;border:0.5px solid #e4e4e4;border-radius:1.5px;box-shadow:0.8px 1.2px 1.6px rgba(0,0,0,0.3)"></div><svg class="a tx" style="left:0;top:0" width="1000" height="563"><text x="362.00" y="369.24" font-size="6.3" fill="#5a5a5a" textLength="259.20" lengthAdjust="spacing" stroke="#5a5a5a" stroke-width="0.07">Displays all cast times in ArcanaTime, the real time all animations take due to server clock ticks.</text></svg>
<div class="a" style="left:425.4px;top:544.6px;width:5.7px;height:5.7px;border-radius:0.6px;background:linear-gradient(135deg,#55c4f8,#1585dc)"></div><div class="a" style="left:431.8px;top:544.6px;width:5.7px;height:5.7px;border-radius:0.6px;background:linear-gradient(135deg,#55c4f8,#1585dc)"></div><div class="a" style="left:425.4px;top:551px;width:5.7px;height:5.7px;border-radius:0.6px;background:linear-gradient(135deg,#55c4f8,#1585dc)"></div><div class="a" style="left:431.8px;top:551px;width:5.7px;height:5.7px;border-radius:0.6px;background:linear-gradient(135deg,#55c4f8,#1585dc)"></div><div class="a" style="left:448.2px;top:544.4px;width:12.6px;height:12.6px;border-radius:50%;background:conic-gradient(from -60deg,#e33b2e 0 120deg,#f7c31a 120deg 240deg,#2d9d4c 240deg 360deg)"></div><div class="a" style="left:451.6px;top:547.8px;width:5.8px;height:5.8px;border-radius:50%;background:#3b7de0;border:1px solid #fff"></div><svg class="a" style="left:471.2px;top:544.4px" width="12.6" height="12.6" viewBox="0 0 12.6 12.6"><circle cx="6.3" cy="6.3" r="6.2" fill="#1478c8"/><path d="M1.6 7.6Q4 5.2 6.4 7.2Q8.6 5.6 11 6.4Q8.8 9.6 6.2 8.6Q3.8 9.4 1.6 7.6Z" fill="#f4faff"/><path d="M6.4 4.6Q7.6 3.2 9.6 3.6Q8.8 5 7 5.2Z" fill="#f4faff"/></svg><svg class="a" style="left:494.2px;top:544.6px" width="12.8" height="11.6" viewBox="0 0 12.8 11.6"><path d="M0.4 1.2Q0.4 0.4 1.2 0.4H4.6L5.8 1.8H11.6Q12.4 1.8 12.4 2.6V10.4Q12.4 11.2 11.6 11.2H1.2Q0.4 11.2 0.4 10.4Z" fill="#e8a317"/><rect x="0.4" y="2.8" width="12" height="8.4" rx="0.8" fill="#f8cf4a"/><rect x="3.2" y="7.4" width="6.4" height="3.8" rx="0.5" fill="#2f8be0"/></svg><div class="a" style="left:517.2px;top:544.4px;width:12.6px;height:12.6px;border-radius:50%;background:#5865f2"></div><svg class="a" style="left:519.6px;top:548px" width="7.8" height="5.6" viewBox="0 0 7.8 5.6"><path d="M1.4 0.6Q3.9 -0.3 6.4 0.6Q7.6 2.6 7.4 4.6Q6.4 5.3 5.4 5.4L5 4.7Q3.9 5 2.8 4.7L2.4 5.4Q1.4 5.3 0.4 4.6Q0.2 2.6 1.4 0.6Z" fill="#fff"/><ellipse cx="2.7" cy="3" rx="0.75" ry="0.85" fill="#5865f2"/><ellipse cx="5.1" cy="3" rx="0.75" ry="0.85" fill="#5865f2"/></svg><svg class="a" style="left:541.4px;top:544px" width="9.6" height="13.4" viewBox="0 0 9.6 13.4"><rect x="0.3" y="0.3" width="9" height="12.8" rx="1" fill="#5b6470"/><rect x="1.4" y="1.5" width="6.8" height="2.8" fill="#7cc8f4"/><g fill="#e8edf2"><rect x="1.4" y="5.4" width="1.8" height="1.9"/><rect x="3.9" y="5.4" width="1.8" height="1.9"/><rect x="1.4" y="8" width="1.8" height="1.9"/><rect x="3.9" y="8" width="1.8" height="1.9"/><rect x="1.4" y="10.6" width="1.8" height="1.7"/><rect x="3.9" y="10.6" width="1.8" height="1.7"/></g><rect x="6.4" y="5.4" width="1.8" height="6.9" fill="#3a8ee6"/></svg><div class="a" style="left:560px;top:541px;width:18.6px;height:20px;border-radius:2px;background:rgba(255,255,255,0.7)"></div><div class="a" style="left:563.2px;top:544.2px;width:12.4px;height:12.4px;border-radius:50%;background:radial-gradient(circle at 30% 38%,#c02828 0,#c02828 14%,transparent 18%),radial-gradient(circle at 42% 68%,#28a848 0,#28a848 13%,transparent 17%),radial-gradient(circle at 68% 55%,#3858d8 0,#3858d8 13%,transparent 17%),#141414"></div><div class="a" style="left:566.2px;top:558.6px;width:6.4px;height:1.3px;border-radius:1px;background:#1a6fd0"></div><div class="a" style="left:453.2px;top:558.8px;width:2.8px;height:1px;border-radius:1px;background:#9a9a9a"></div><div class="a" style="left:499.4px;top:558.8px;width:2.8px;height:1px;border-radius:1px;background:#9a9a9a"></div><div class="a" style="left:522.2px;top:558.8px;width:2.8px;height:1px;border-radius:1px;background:#9a9a9a"></div><div class="a" style="left:545px;top:558.8px;width:2.8px;height:1px;border-radius:1px;background:#9a9a9a"></div><svg class="a" style="left:876px;top:547.4px" width="6" height="4" viewBox="0 0 6 4"><path d="M0.4 3.4L3 0.8L5.6 3.4" stroke="#333" stroke-width="0.7" fill="none"/></svg><div class="a" style="left:915.4px;top:546.4px;width:7.2px;height:5.6px;border:0.7px solid #333;border-radius:0.8px"></div><div class="a" style="left:917.4px;top:553.4px;width:4.6px;height:0.7px;background:#333"></div><svg class="a" style="left:927.6px;top:546px" width="9" height="8" viewBox="0 0 9 8"><path d="M0.6 2.8H2L4 1V7L2 5.2H0.6Z" fill="none" stroke="#333" stroke-width="0.6"/><path d="M5.4 2.2Q6.6 4 5.4 5.8M6.8 1.2Q8.6 4 6.8 6.8" fill="none" stroke="#333" stroke-width="0.6"/></svg><svg class="a" style="left:983px;top:546.4px" width="7" height="8" viewBox="0 0 7 8"><path d="M1 5.6Q1.6 4.6 1.6 3Q1.6 1 3.5 1Q5.4 1 5.4 3Q5.4 4.6 6 5.6Z" fill="#222"/><circle cx="3.5" cy="6.6" r="0.8" fill="#222"/><path d="M3 2.2L4.6 2.2L3.2 4.4L4.8 4.4" stroke="#e8e8e8" stroke-width="0.5" fill="none"/></svg><svg class="a tx" style="left:0;top:0" width="1000" height="563"><text x="894.00" y="548.50" font-size="5.6" fill="#222" textLength="11.80" lengthAdjust="spacing" stroke="#222" stroke-width="0.05">ENG</text><text x="896.40" y="556.50" font-size="5.6" fill="#222" textLength="7.60" lengthAdjust="spacing" stroke="#222" stroke-width="0.05">US</text><text x="955.00" y="548.10" font-size="5.6" fill="#222" textLength="21.80" lengthAdjust="spacing" stroke="#222" stroke-width="0.05">8:46 PM</text><text x="945.20" y="556.30" font-size="5.6" fill="#222" textLength="31.80" lengthAdjust="spacing" stroke="#222" stroke-width="0.05">2024-04-22</text></svg>

</body></html>
